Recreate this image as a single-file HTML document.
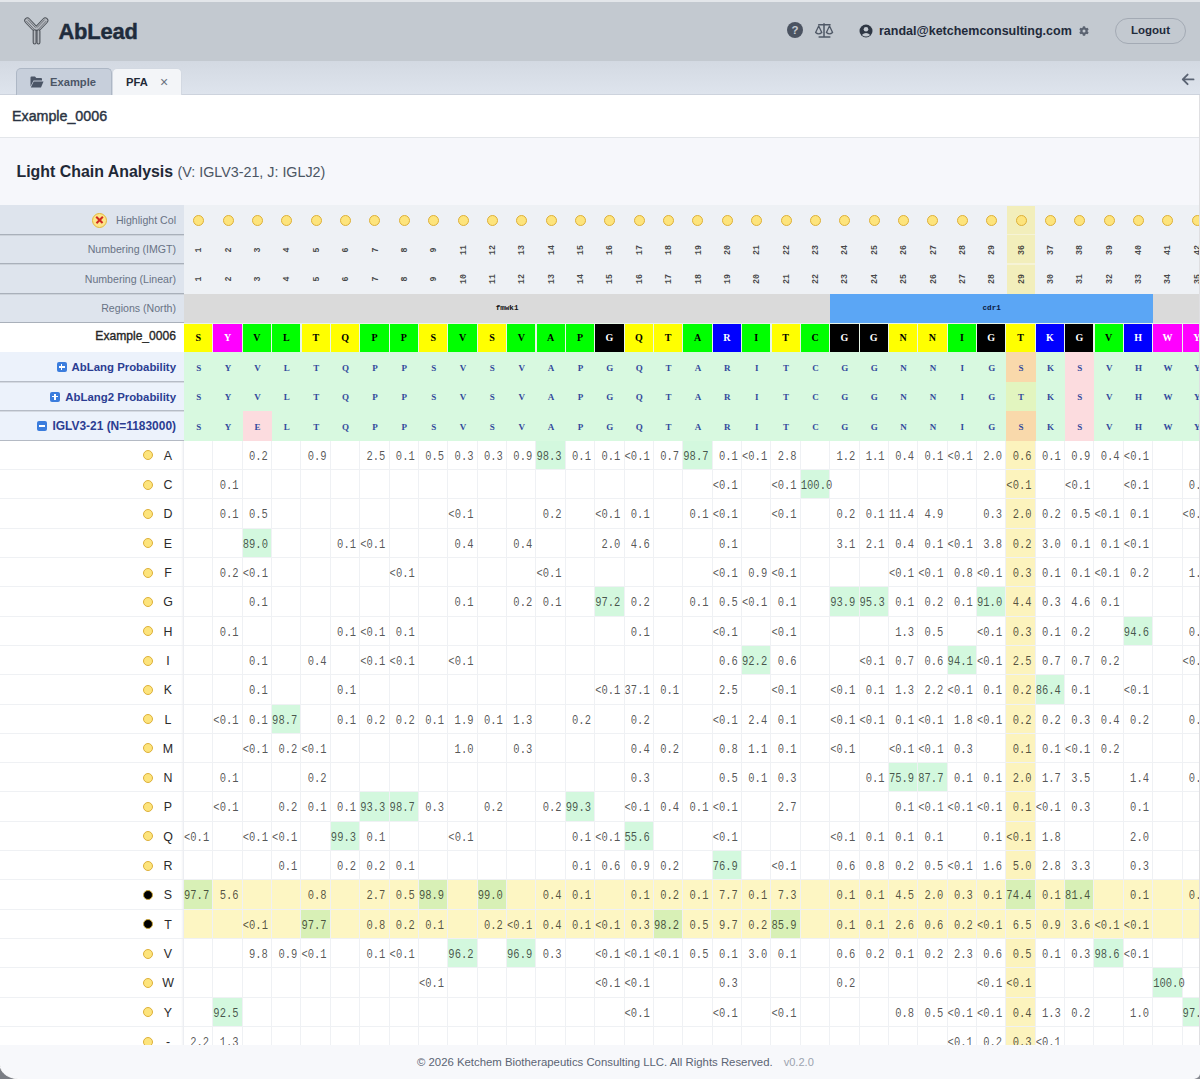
<!DOCTYPE html>
<html><head><meta charset="utf-8">
<style>
html,body{margin:0;padding:0;}
body{width:1200px;height:1079px;overflow:hidden;position:relative;background:#f5f6fa;font-family:"Liberation Sans",sans-serif;}
.a{position:absolute;box-sizing:border-box;}
.hdr{left:0;top:0;width:1200px;height:61px;background:#c3c9d0;}
.logo-t{left:58.5px;top:16.6px;font-size:21.9px;font-weight:bold;color:#1f2c3c;letter-spacing:-0.2px;line-height:30px;-webkit-text-stroke:0.45px #1f2c3c;}
.email{left:879px;top:22.8px;font-size:12.5px;font-weight:bold;color:#1f2a3a;line-height:17px;}
.logout{left:1115px;top:18px;width:71px;height:25.5px;border:1px solid #a3aab4;border-radius:13px;font-size:11.5px;font-weight:bold;color:#1f2a3a;text-align:center;line-height:23px;}
.tabbar{left:0;top:61px;width:1200px;height:34px;background:linear-gradient(#d3d9e2,#dee4ed);border-bottom:1px solid #cdd3dd;}
.tab1{left:16px;top:68px;width:96px;height:27px;background:#c7cfdb;border:1px solid #adb7c5;border-bottom:none;border-radius:5px 5px 0 0;}
.tab2{left:112px;top:68px;width:69.5px;height:27px;background:#f3f5f8;border:1px solid #d3d9e2;border-bottom:none;border-radius:5px 5px 0 0;}
.tabt{font-size:11.2px;font-weight:bold;line-height:27px;}
.panel{left:0;top:95px;width:1200px;height:43px;background:#fff;border-bottom:1px solid #e3e6ea;}
.ptitle{left:12px;top:107.3px;font-size:14.25px;font-weight:normal;-webkit-text-stroke:0.4px #2a3342;color:#2a3342;line-height:18px;}
.sec{left:0;top:138px;width:1200px;height:67.2px;background:#f6f7fb;}
.stitle{left:16.5px;top:162.4px;font-size:15.9px;font-weight:bold;color:#1f2937;line-height:20px;}
.stitle span{margin-left:0px;font-weight:normal;font-size:14.3px;color:#4b5563;}
.lh{left:0;padding-top:0.6px;width:176px;text-align:right;font-size:10.6px;color:#697385;white-space:nowrap;}
.lex{left:0;width:176px;text-align:right;font-size:12.1px;font-weight:normal;-webkit-text-stroke:0.35px #262626;color:#262626;}
.lab{left:0;padding-top:0.8px;width:176px;text-align:right;font-size:11.4px;font-weight:bold;color:#2b3d92;white-space:nowrap;}
.bic{display:inline-block;width:10px;height:10px;background:#3b7ddd;border-radius:2px;margin-right:5px;vertical-align:-1px;position:relative;}
.pl::before,.mi::before{content:"";position:absolute;left:2px;top:4.25px;width:6px;height:1.5px;background:#fff;}
.pl::after{content:"";position:absolute;left:4.25px;top:2px;width:1.5px;height:6px;background:#fff;}
.xic{width:15px;height:15px;border-radius:50%;background:#fde58a;border:1px solid #e3b93c;}
.xic::before,.xic::after{content:"";position:absolute;left:1.9px;top:5.7px;width:9.2px;height:1.6px;background:#cf2a20;transform:rotate(45deg);}
.xic::after{transform:rotate(-45deg);}
.circ{width:11px;height:11px;border-radius:50%;background:#fde47c;border:1px solid #ddb03a;}
.num{width:30px;height:12px;text-align:center;font-family:"Liberation Mono",monospace;font-weight:bold;font-size:8.3px;line-height:12px;color:rgba(40,40,40,0.85);transform:rotate(-90deg);}
.reg{text-align:center;font-family:"Liberation Mono",monospace;font-size:7.6px;font-weight:bold;color:#111;}
.sq{text-align:center;font-family:"Liberation Serif",serif;font-size:10px;font-weight:bold;}
.ab{text-align:center;font-family:"Liberation Serif",serif;font-size:9px;font-weight:bold;color:#33499c;padding-top:1.6px;}
.dot{width:10px;height:10px;border-radius:50%;background:#fde47c;border:1px solid #ddb03a;}
.dot.blk{background:#000;border-color:#c9a43a;}
.aal{width:20px;text-align:center;font-size:12.4px;color:#2b2b2b;padding-top:1px;}
.dv{text-align:right;padding-right:4.2px;padding-top:1px;font-family:"Liberation Mono",monospace;font-size:10.5px;color:rgba(0,0,0,0.68);white-space:nowrap;overflow:visible;transform:translateY(0.9px) scaleY(1.14);}
.foot{left:0;top:1045px;width:1200px;height:34px;background:#f7f8fb;}
.ftxt{left:417px;top:1055px;font-size:11.36px;color:#5b6474;line-height:15px;white-space:nowrap;}
.ftxt span{color:#9ca3af;margin-left:11px;font-size:11.07px;}
</style></head><body>
<div class="a hdr"></div>
<div class="a" style="left:0;top:0;width:1200px;height:1.5px;background:#e3e6ea;"></div>
<svg class="a" style="left:20px;top:14.8px;" width="32" height="32" viewBox="0 0 32 32">
<g fill="none" stroke-linecap="round" stroke-linejoin="round">
<path d="M7.4 5.6 L14.6 13.2 M25.2 5.6 L18 13.2" stroke="#4d5259" stroke-width="6.3"/>
<path d="M7.4 5.6 L14.6 13.2 M25.2 5.6 L18 13.2" stroke="#b4b8be" stroke-width="4.5"/>
<path d="M6.6 6.36 L13.8 13.96 M8.2 4.84 L15.4 12.44 M26 6.36 L18.8 13.96 M24.4 4.84 L17.2 12.44" stroke="#5a5e65" stroke-width="0.75"/>
</g>
<rect x="13.2" y="14.8" width="2.9" height="14.2" rx="1.55" fill="#b4b8be" stroke="#4d5259" stroke-width="1.1"/>
<rect x="17" y="14.8" width="2.9" height="14.2" rx="1.55" fill="#b4b8be" stroke="#4d5259" stroke-width="1.1"/>
</svg>
<div class="a logo-t">AbLead</div>
<svg class="a" style="left:787px;top:22px;" width="16" height="16" viewBox="0 0 16 16"><circle cx="8" cy="8" r="8" fill="#4b5361"/><text x="8" y="12.2" text-anchor="middle" font-family="Liberation Sans" font-weight="bold" font-size="11.5" fill="#c3c9d0">?</text></svg>
<svg class="a" style="left:814px;top:21px;" width="20" height="18" viewBox="0 0 20 18"><g fill="none" stroke="#4f5866" stroke-width="1.5"><path d="M10 2.2 V16 M4.6 16.1 H16.4 M4.2 3.7 H16.6"/><path d="M1.6 11.5 L4.7 5 L7.8 11.5 Q4.7 14.2 1.6 11.5 Z M12.4 11.5 L15.5 5 L18.6 11.5 Q15.5 14.2 12.4 11.5 Z" stroke-width="1.3" stroke-linejoin="round"/></g></svg>
<svg class="a" style="left:859px;top:23.5px;" width="14" height="14" viewBox="0 0 14 14"><circle cx="7" cy="7" r="6.5" fill="#2f3744"/><circle cx="7" cy="5.3" r="2.3" fill="#c3c9d0"/><path d="M2.8 11 Q7 7.2 11.2 11 Q7 14 2.8 11Z" fill="#c3c9d0"/></svg>
<div class="a email">randal@ketchemconsulting.com</div>
<svg class="a" style="left:1078.5px;top:25.5px;" width="10" height="10" viewBox="0 0 10 10"><g fill="#5b6371"><circle cx="5" cy="5" r="3.5"/><rect x="3.7" y="0.2" width="2.6" height="9.6" rx="0.9"/><rect x="3.7" y="0.2" width="2.6" height="9.6" rx="0.9" transform="rotate(60 5 5)"/><rect x="3.7" y="0.2" width="2.6" height="9.6" rx="0.9" transform="rotate(120 5 5)"/></g><circle cx="5" cy="5" r="1.5" fill="#c3c9d0"/></svg>
<div class="a logout">Logout</div>
<div class="a tabbar"></div>
<div class="a tab1"><svg style="position:absolute;left:13px;top:7px;" width="14" height="12" viewBox="0 0 14 12"><path d="M0.5 1.5 Q0.5 0.5 1.5 0.5 H5 L6.3 2 H11 Q12 2 12 3 V4.5 H3.5 L0.5 10.5 Z" fill="#4b5566"/><path d="M3.7 5.5 H13.5 L11 11.5 H0.8 Z" fill="#4b5566"/></svg><span class="a tabt" style="left:33px;top:0;color:#4b5566;">Example</span></div>
<div class="a tab2"><span class="a tabt" style="left:13px;top:0;color:#1f2937;">PFA</span><span class="a" style="left:47px;top:0;font-size:14px;line-height:26px;color:#6b7280;">&#215;</span></div>
<svg class="a" style="left:1181px;top:72px;" width="14" height="14" viewBox="0 0 14 14"><g fill="none" stroke="#5b6474" stroke-width="1.9" stroke-linecap="round" stroke-linejoin="round"><path d="M1.8 7.4 H12.5 M6.6 2.6 L1.8 7.4 L6.6 12.2"/></g></svg>
<div class="a panel"></div>
<div class="a ptitle">Example_0006</div>
<div class="a sec"></div>
<div class="a stitle">Light Chain Analysis <span>(V: IGLV3-21, J: IGLJ2)</span></div>
<div class="a" style="left:0.00px;top:205.20px;width:184.00px;height:29.44px;background:#dee4ed;"></div>
<div class="a" style="left:0.00px;top:234.64px;width:184.00px;height:29.44px;background:#dee4ed;"></div>
<div class="a" style="left:0.00px;top:264.08px;width:184.00px;height:29.44px;background:#dee4ed;"></div>
<div class="a" style="left:0.00px;top:293.52px;width:184.00px;height:29.44px;background:#dee4ed;"></div>
<div class="a" style="left:184.00px;top:205.20px;width:1016.00px;height:88.32px;background:#eef1f5;"></div>
<div class="a" style="left:1007.16px;top:206.00px;width:27.77px;height:87.52px;background:#f2eebb;"></div>
<div class="a" style="left:1007.16px;top:234.04px;width:27.77px;height:1.20px;background:#f6f3d6;"></div>
<div class="a" style="left:1007.16px;top:263.48px;width:27.77px;height:1.20px;background:#f6f3d6;"></div>
<div class="a lh" style="top:205.20px;height:29.44px;line-height:29.44px;">Highlight Col</div>
<div class="a lh" style="top:234.64px;height:29.44px;line-height:29.44px;">Numbering (IMGT)</div>
<div class="a lh" style="top:264.08px;height:29.44px;line-height:29.44px;">Numbering (Linear)</div>
<div class="a lh" style="top:293.52px;height:29.44px;line-height:29.44px;">Regions (North)</div>
<div class="a" style="left:0.00px;top:234.00px;width:184.00px;height:1.00px;background:#a9b0ba;"></div>
<div class="a" style="left:0.00px;top:235.00px;width:184.00px;height:1.00px;background:#ccd2da;"></div>
<div class="a" style="left:0.00px;top:263.00px;width:184.00px;height:1.00px;background:#a9b0ba;"></div>
<div class="a" style="left:0.00px;top:264.00px;width:184.00px;height:1.00px;background:#ccd2da;"></div>
<div class="a" style="left:0.00px;top:293.00px;width:184.00px;height:1.00px;background:#a9b0ba;"></div>
<div class="a" style="left:0.00px;top:294.00px;width:184.00px;height:1.00px;background:#ccd2da;"></div>
<div class="a" style="left:0.00px;top:322.00px;width:184.00px;height:1.00px;background:#a9b0ba;"></div>
<div class="a" style="left:0.00px;top:323.00px;width:184.00px;height:1.00px;background:#ccd2da;"></div>
<div class="a xic" style="left:92px;top:212.5px;"></div>
<div class="a circ" style="left:193.19px;top:215.12px;"></div>
<div class="a circ" style="left:222.56px;top:215.12px;"></div>
<div class="a circ" style="left:251.93px;top:215.12px;"></div>
<div class="a circ" style="left:281.30px;top:215.12px;"></div>
<div class="a circ" style="left:310.67px;top:215.12px;"></div>
<div class="a circ" style="left:340.04px;top:215.12px;"></div>
<div class="a circ" style="left:369.41px;top:215.12px;"></div>
<div class="a circ" style="left:398.78px;top:215.12px;"></div>
<div class="a circ" style="left:428.15px;top:215.12px;"></div>
<div class="a circ" style="left:457.51px;top:215.12px;"></div>
<div class="a circ" style="left:486.88px;top:215.12px;"></div>
<div class="a circ" style="left:516.25px;top:215.12px;"></div>
<div class="a circ" style="left:545.62px;top:215.12px;"></div>
<div class="a circ" style="left:574.99px;top:215.12px;"></div>
<div class="a circ" style="left:604.37px;top:215.12px;"></div>
<div class="a circ" style="left:633.73px;top:215.12px;"></div>
<div class="a circ" style="left:663.11px;top:215.12px;"></div>
<div class="a circ" style="left:692.47px;top:215.12px;"></div>
<div class="a circ" style="left:721.84px;top:215.12px;"></div>
<div class="a circ" style="left:751.21px;top:215.12px;"></div>
<div class="a circ" style="left:780.58px;top:215.12px;"></div>
<div class="a circ" style="left:809.95px;top:215.12px;"></div>
<div class="a circ" style="left:839.32px;top:215.12px;"></div>
<div class="a circ" style="left:868.69px;top:215.12px;"></div>
<div class="a circ" style="left:898.06px;top:215.12px;"></div>
<div class="a circ" style="left:927.43px;top:215.12px;"></div>
<div class="a circ" style="left:956.80px;top:215.12px;"></div>
<div class="a circ" style="left:986.17px;top:215.12px;"></div>
<div class="a circ" style="left:1015.54px;top:215.12px;"></div>
<div class="a circ" style="left:1044.91px;top:215.12px;"></div>
<div class="a circ" style="left:1074.28px;top:215.12px;"></div>
<div class="a circ" style="left:1103.65px;top:215.12px;"></div>
<div class="a circ" style="left:1133.03px;top:215.12px;"></div>
<div class="a circ" style="left:1162.39px;top:215.12px;"></div>
<div class="a circ" style="left:1191.76px;top:215.12px;"></div>
<div class="a num" style="left:184.28px;top:243.86px;">1</div>
<div class="a num" style="left:184.28px;top:273.30px;">1</div>
<div class="a num" style="left:213.66px;top:243.86px;">2</div>
<div class="a num" style="left:213.66px;top:273.30px;">2</div>
<div class="a num" style="left:243.03px;top:243.86px;">3</div>
<div class="a num" style="left:243.03px;top:273.30px;">3</div>
<div class="a num" style="left:272.40px;top:243.86px;">4</div>
<div class="a num" style="left:272.40px;top:273.30px;">4</div>
<div class="a num" style="left:301.77px;top:243.86px;">5</div>
<div class="a num" style="left:301.77px;top:273.30px;">5</div>
<div class="a num" style="left:331.14px;top:243.86px;">6</div>
<div class="a num" style="left:331.14px;top:273.30px;">6</div>
<div class="a num" style="left:360.51px;top:243.86px;">7</div>
<div class="a num" style="left:360.51px;top:273.30px;">7</div>
<div class="a num" style="left:389.88px;top:243.86px;">8</div>
<div class="a num" style="left:389.88px;top:273.30px;">8</div>
<div class="a num" style="left:419.25px;top:243.86px;">9</div>
<div class="a num" style="left:419.25px;top:273.30px;">9</div>
<div class="a num" style="left:448.62px;top:243.86px;">11</div>
<div class="a num" style="left:448.62px;top:273.30px;">10</div>
<div class="a num" style="left:477.99px;top:243.86px;">12</div>
<div class="a num" style="left:477.99px;top:273.30px;">11</div>
<div class="a num" style="left:507.36px;top:243.86px;">13</div>
<div class="a num" style="left:507.36px;top:273.30px;">12</div>
<div class="a num" style="left:536.73px;top:243.86px;">14</div>
<div class="a num" style="left:536.73px;top:273.30px;">13</div>
<div class="a num" style="left:566.09px;top:243.86px;">15</div>
<div class="a num" style="left:566.09px;top:273.30px;">14</div>
<div class="a num" style="left:595.47px;top:243.86px;">16</div>
<div class="a num" style="left:595.47px;top:273.30px;">15</div>
<div class="a num" style="left:624.83px;top:243.86px;">17</div>
<div class="a num" style="left:624.83px;top:273.30px;">16</div>
<div class="a num" style="left:654.21px;top:243.86px;">18</div>
<div class="a num" style="left:654.21px;top:273.30px;">17</div>
<div class="a num" style="left:683.57px;top:243.86px;">19</div>
<div class="a num" style="left:683.57px;top:273.30px;">18</div>
<div class="a num" style="left:712.94px;top:243.86px;">20</div>
<div class="a num" style="left:712.94px;top:273.30px;">19</div>
<div class="a num" style="left:742.31px;top:243.86px;">21</div>
<div class="a num" style="left:742.31px;top:273.30px;">20</div>
<div class="a num" style="left:771.68px;top:243.86px;">22</div>
<div class="a num" style="left:771.68px;top:273.30px;">21</div>
<div class="a num" style="left:801.05px;top:243.86px;">23</div>
<div class="a num" style="left:801.05px;top:273.30px;">22</div>
<div class="a num" style="left:830.42px;top:243.86px;">24</div>
<div class="a num" style="left:830.42px;top:273.30px;">23</div>
<div class="a num" style="left:859.79px;top:243.86px;">25</div>
<div class="a num" style="left:859.79px;top:273.30px;">24</div>
<div class="a num" style="left:889.16px;top:243.86px;">26</div>
<div class="a num" style="left:889.16px;top:273.30px;">25</div>
<div class="a num" style="left:918.53px;top:243.86px;">27</div>
<div class="a num" style="left:918.53px;top:273.30px;">26</div>
<div class="a num" style="left:947.90px;top:243.86px;">28</div>
<div class="a num" style="left:947.90px;top:273.30px;">27</div>
<div class="a num" style="left:977.27px;top:243.86px;">29</div>
<div class="a num" style="left:977.27px;top:273.30px;">28</div>
<div class="a num" style="left:1006.64px;top:243.86px;">36</div>
<div class="a num" style="left:1006.64px;top:273.30px;">29</div>
<div class="a num" style="left:1036.01px;top:243.86px;">37</div>
<div class="a num" style="left:1036.01px;top:273.30px;">30</div>
<div class="a num" style="left:1065.38px;top:243.86px;">38</div>
<div class="a num" style="left:1065.38px;top:273.30px;">31</div>
<div class="a num" style="left:1094.75px;top:243.86px;">39</div>
<div class="a num" style="left:1094.75px;top:273.30px;">32</div>
<div class="a num" style="left:1124.12px;top:243.86px;">40</div>
<div class="a num" style="left:1124.12px;top:273.30px;">33</div>
<div class="a num" style="left:1153.49px;top:243.86px;">41</div>
<div class="a num" style="left:1153.49px;top:273.30px;">34</div>
<div class="a num" style="left:1182.86px;top:243.86px;">42</div>
<div class="a num" style="left:1182.86px;top:273.30px;">35</div>
<div class="a" style="left:184.00px;top:293.52px;width:1016.00px;height:29.44px;background:#dadada;"></div>
<div class="a" style="left:830.14px;top:293.52px;width:323.07px;height:29.44px;background:#5ba6f5;"></div>
<div class="a reg" style="left:184.00px;top:293.52px;width:646.14px;height:29.44px;line-height:29.44px;">fmwk1</div>
<div class="a reg" style="left:830.14px;top:293.52px;width:323.07px;height:29.44px;line-height:29.44px;color:#0b1a40;">cdr1</div>
<div class="a" style="left:0.00px;top:322.96px;width:184.00px;height:29.44px;background:#fff;"></div>
<div class="a lex" style="top:321.96px;height:29.44px;line-height:29.44px;">Example_0006</div>
<div class="a" style="left:184.00px;top:322.96px;width:1016.00px;height:29.44px;background:#e8f5e8;"></div>
<div class="a sq" style="left:184.10px;top:323.66px;width:28.27px;height:28.44px;line-height:28.44px;background:#ffff00;color:#000;">S</div>
<div class="a sq" style="left:213.47px;top:323.66px;width:28.27px;height:28.44px;line-height:28.44px;background:#ff00ff;color:#fff;">Y</div>
<div class="a sq" style="left:242.84px;top:323.66px;width:28.27px;height:28.44px;line-height:28.44px;background:#00ff00;color:#000;">V</div>
<div class="a sq" style="left:272.21px;top:323.66px;width:28.27px;height:28.44px;line-height:28.44px;background:#00ff00;color:#000;">L</div>
<div class="a sq" style="left:301.58px;top:323.66px;width:28.27px;height:28.44px;line-height:28.44px;background:#ffff00;color:#000;">T</div>
<div class="a sq" style="left:330.95px;top:323.66px;width:28.27px;height:28.44px;line-height:28.44px;background:#ffff00;color:#000;">Q</div>
<div class="a sq" style="left:360.32px;top:323.66px;width:28.27px;height:28.44px;line-height:28.44px;background:#00ff00;color:#000;">P</div>
<div class="a sq" style="left:389.69px;top:323.66px;width:28.27px;height:28.44px;line-height:28.44px;background:#00ff00;color:#000;">P</div>
<div class="a sq" style="left:419.06px;top:323.66px;width:28.27px;height:28.44px;line-height:28.44px;background:#ffff00;color:#000;">S</div>
<div class="a sq" style="left:448.43px;top:323.66px;width:28.27px;height:28.44px;line-height:28.44px;background:#00ff00;color:#000;">V</div>
<div class="a sq" style="left:477.80px;top:323.66px;width:28.27px;height:28.44px;line-height:28.44px;background:#ffff00;color:#000;">S</div>
<div class="a sq" style="left:507.17px;top:323.66px;width:28.27px;height:28.44px;line-height:28.44px;background:#00ff00;color:#000;">V</div>
<div class="a sq" style="left:536.54px;top:323.66px;width:28.27px;height:28.44px;line-height:28.44px;background:#00ff00;color:#000;">A</div>
<div class="a sq" style="left:565.91px;top:323.66px;width:28.27px;height:28.44px;line-height:28.44px;background:#00ff00;color:#000;">P</div>
<div class="a sq" style="left:595.28px;top:323.66px;width:28.27px;height:28.44px;line-height:28.44px;background:#000000;color:#fff;">G</div>
<div class="a sq" style="left:624.65px;top:323.66px;width:28.27px;height:28.44px;line-height:28.44px;background:#ffff00;color:#000;">Q</div>
<div class="a sq" style="left:654.02px;top:323.66px;width:28.27px;height:28.44px;line-height:28.44px;background:#ffff00;color:#000;">T</div>
<div class="a sq" style="left:683.39px;top:323.66px;width:28.27px;height:28.44px;line-height:28.44px;background:#00ff00;color:#000;">A</div>
<div class="a sq" style="left:712.76px;top:323.66px;width:28.27px;height:28.44px;line-height:28.44px;background:#0000ff;color:#fff;">R</div>
<div class="a sq" style="left:742.13px;top:323.66px;width:28.27px;height:28.44px;line-height:28.44px;background:#00ff00;color:#000;">I</div>
<div class="a sq" style="left:771.50px;top:323.66px;width:28.27px;height:28.44px;line-height:28.44px;background:#ffff00;color:#000;">T</div>
<div class="a sq" style="left:800.87px;top:323.66px;width:28.27px;height:28.44px;line-height:28.44px;background:#00ff00;color:#000;">C</div>
<div class="a sq" style="left:830.24px;top:323.66px;width:28.27px;height:28.44px;line-height:28.44px;background:#000000;color:#fff;">G</div>
<div class="a sq" style="left:859.61px;top:323.66px;width:28.27px;height:28.44px;line-height:28.44px;background:#000000;color:#fff;">G</div>
<div class="a sq" style="left:888.98px;top:323.66px;width:28.27px;height:28.44px;line-height:28.44px;background:#ffff00;color:#000;">N</div>
<div class="a sq" style="left:918.35px;top:323.66px;width:28.27px;height:28.44px;line-height:28.44px;background:#ffff00;color:#000;">N</div>
<div class="a sq" style="left:947.72px;top:323.66px;width:28.27px;height:28.44px;line-height:28.44px;background:#00ff00;color:#000;">I</div>
<div class="a sq" style="left:977.09px;top:323.66px;width:28.27px;height:28.44px;line-height:28.44px;background:#000000;color:#fff;">G</div>
<div class="a sq" style="left:1006.46px;top:323.66px;width:28.27px;height:28.44px;line-height:28.44px;background:#ffff00;color:#000;">T</div>
<div class="a sq" style="left:1035.83px;top:323.66px;width:28.27px;height:28.44px;line-height:28.44px;background:#0000ff;color:#fff;">K</div>
<div class="a sq" style="left:1065.20px;top:323.66px;width:28.27px;height:28.44px;line-height:28.44px;background:#000000;color:#fff;">G</div>
<div class="a sq" style="left:1094.57px;top:323.66px;width:28.27px;height:28.44px;line-height:28.44px;background:#00ff00;color:#000;">V</div>
<div class="a sq" style="left:1123.94px;top:323.66px;width:28.27px;height:28.44px;line-height:28.44px;background:#0000ff;color:#fff;">H</div>
<div class="a sq" style="left:1153.31px;top:323.66px;width:28.27px;height:28.44px;line-height:28.44px;background:#ff00ff;color:#fff;">W</div>
<div class="a sq" style="left:1182.68px;top:323.66px;width:28.27px;height:28.44px;line-height:28.44px;background:#ff00ff;color:#fff;">Y</div>
<div class="a" style="left:0.00px;top:351.60px;width:1200.00px;height:1.80px;background:#9ba1aa;"></div>
<div class="a" style="left:0.00px;top:352.40px;width:184.00px;height:29.44px;background:#ecf2fb;"></div>
<div class="a lab" style="top:352.40px;height:29.44px;line-height:29.44px;"><span class="bic"><span class="pl"></span></span>AbLang Probability</div>
<div class="a" style="left:184.00px;top:352.40px;width:1016.00px;height:29.44px;background:#d8f9e0;"></div>
<div class="a ab" style="left:184.00px;top:352.40px;width:29.37px;height:29.44px;line-height:29.44px;">S</div>
<div class="a ab" style="left:213.37px;top:352.40px;width:29.37px;height:29.44px;line-height:29.44px;">Y</div>
<div class="a ab" style="left:242.74px;top:352.40px;width:29.37px;height:29.44px;line-height:29.44px;">V</div>
<div class="a ab" style="left:272.11px;top:352.40px;width:29.37px;height:29.44px;line-height:29.44px;">L</div>
<div class="a ab" style="left:301.48px;top:352.40px;width:29.37px;height:29.44px;line-height:29.44px;">T</div>
<div class="a ab" style="left:330.85px;top:352.40px;width:29.37px;height:29.44px;line-height:29.44px;">Q</div>
<div class="a ab" style="left:360.22px;top:352.40px;width:29.37px;height:29.44px;line-height:29.44px;">P</div>
<div class="a ab" style="left:389.59px;top:352.40px;width:29.37px;height:29.44px;line-height:29.44px;">P</div>
<div class="a ab" style="left:418.96px;top:352.40px;width:29.37px;height:29.44px;line-height:29.44px;">S</div>
<div class="a ab" style="left:448.33px;top:352.40px;width:29.37px;height:29.44px;line-height:29.44px;">V</div>
<div class="a ab" style="left:477.70px;top:352.40px;width:29.37px;height:29.44px;line-height:29.44px;">S</div>
<div class="a ab" style="left:507.07px;top:352.40px;width:29.37px;height:29.44px;line-height:29.44px;">V</div>
<div class="a ab" style="left:536.44px;top:352.40px;width:29.37px;height:29.44px;line-height:29.44px;">A</div>
<div class="a ab" style="left:565.81px;top:352.40px;width:29.37px;height:29.44px;line-height:29.44px;">P</div>
<div class="a ab" style="left:595.18px;top:352.40px;width:29.37px;height:29.44px;line-height:29.44px;">G</div>
<div class="a ab" style="left:624.55px;top:352.40px;width:29.37px;height:29.44px;line-height:29.44px;">Q</div>
<div class="a ab" style="left:653.92px;top:352.40px;width:29.37px;height:29.44px;line-height:29.44px;">T</div>
<div class="a ab" style="left:683.29px;top:352.40px;width:29.37px;height:29.44px;line-height:29.44px;">A</div>
<div class="a ab" style="left:712.66px;top:352.40px;width:29.37px;height:29.44px;line-height:29.44px;">R</div>
<div class="a ab" style="left:742.03px;top:352.40px;width:29.37px;height:29.44px;line-height:29.44px;">I</div>
<div class="a ab" style="left:771.40px;top:352.40px;width:29.37px;height:29.44px;line-height:29.44px;">T</div>
<div class="a ab" style="left:800.77px;top:352.40px;width:29.37px;height:29.44px;line-height:29.44px;">C</div>
<div class="a ab" style="left:830.14px;top:352.40px;width:29.37px;height:29.44px;line-height:29.44px;">G</div>
<div class="a ab" style="left:859.51px;top:352.40px;width:29.37px;height:29.44px;line-height:29.44px;">G</div>
<div class="a ab" style="left:888.88px;top:352.40px;width:29.37px;height:29.44px;line-height:29.44px;">N</div>
<div class="a ab" style="left:918.25px;top:352.40px;width:29.37px;height:29.44px;line-height:29.44px;">N</div>
<div class="a ab" style="left:947.62px;top:352.40px;width:29.37px;height:29.44px;line-height:29.44px;">I</div>
<div class="a ab" style="left:976.99px;top:352.40px;width:29.37px;height:29.44px;line-height:29.44px;">G</div>
<div class="a ab" style="left:1006.36px;top:352.40px;width:29.37px;height:29.44px;line-height:29.44px;background:#f9d9ab;">S</div>
<div class="a ab" style="left:1035.73px;top:352.40px;width:29.37px;height:29.44px;line-height:29.44px;">K</div>
<div class="a ab" style="left:1065.10px;top:352.40px;width:29.37px;height:29.44px;line-height:29.44px;background:#fcdcdf;">S</div>
<div class="a ab" style="left:1094.47px;top:352.40px;width:29.37px;height:29.44px;line-height:29.44px;">V</div>
<div class="a ab" style="left:1123.84px;top:352.40px;width:29.37px;height:29.44px;line-height:29.44px;">H</div>
<div class="a ab" style="left:1153.21px;top:352.40px;width:29.37px;height:29.44px;line-height:29.44px;">W</div>
<div class="a ab" style="left:1182.58px;top:352.40px;width:29.37px;height:29.44px;line-height:29.44px;">Y</div>
<div class="a" style="left:0.00px;top:381.84px;width:184.00px;height:29.44px;background:#ecf2fb;"></div>
<div class="a lab" style="top:381.84px;height:29.44px;line-height:29.44px;"><span class="bic"><span class="pl"></span></span>AbLang2 Probability</div>
<div class="a" style="left:184.00px;top:381.84px;width:1016.00px;height:29.44px;background:#d8f9e0;"></div>
<div class="a ab" style="left:184.00px;top:381.84px;width:29.37px;height:29.44px;line-height:29.44px;">S</div>
<div class="a ab" style="left:213.37px;top:381.84px;width:29.37px;height:29.44px;line-height:29.44px;">Y</div>
<div class="a ab" style="left:242.74px;top:381.84px;width:29.37px;height:29.44px;line-height:29.44px;">V</div>
<div class="a ab" style="left:272.11px;top:381.84px;width:29.37px;height:29.44px;line-height:29.44px;">L</div>
<div class="a ab" style="left:301.48px;top:381.84px;width:29.37px;height:29.44px;line-height:29.44px;">T</div>
<div class="a ab" style="left:330.85px;top:381.84px;width:29.37px;height:29.44px;line-height:29.44px;">Q</div>
<div class="a ab" style="left:360.22px;top:381.84px;width:29.37px;height:29.44px;line-height:29.44px;">P</div>
<div class="a ab" style="left:389.59px;top:381.84px;width:29.37px;height:29.44px;line-height:29.44px;">P</div>
<div class="a ab" style="left:418.96px;top:381.84px;width:29.37px;height:29.44px;line-height:29.44px;">S</div>
<div class="a ab" style="left:448.33px;top:381.84px;width:29.37px;height:29.44px;line-height:29.44px;">V</div>
<div class="a ab" style="left:477.70px;top:381.84px;width:29.37px;height:29.44px;line-height:29.44px;">S</div>
<div class="a ab" style="left:507.07px;top:381.84px;width:29.37px;height:29.44px;line-height:29.44px;">V</div>
<div class="a ab" style="left:536.44px;top:381.84px;width:29.37px;height:29.44px;line-height:29.44px;">A</div>
<div class="a ab" style="left:565.81px;top:381.84px;width:29.37px;height:29.44px;line-height:29.44px;">P</div>
<div class="a ab" style="left:595.18px;top:381.84px;width:29.37px;height:29.44px;line-height:29.44px;">G</div>
<div class="a ab" style="left:624.55px;top:381.84px;width:29.37px;height:29.44px;line-height:29.44px;">Q</div>
<div class="a ab" style="left:653.92px;top:381.84px;width:29.37px;height:29.44px;line-height:29.44px;">T</div>
<div class="a ab" style="left:683.29px;top:381.84px;width:29.37px;height:29.44px;line-height:29.44px;">A</div>
<div class="a ab" style="left:712.66px;top:381.84px;width:29.37px;height:29.44px;line-height:29.44px;">R</div>
<div class="a ab" style="left:742.03px;top:381.84px;width:29.37px;height:29.44px;line-height:29.44px;">I</div>
<div class="a ab" style="left:771.40px;top:381.84px;width:29.37px;height:29.44px;line-height:29.44px;">T</div>
<div class="a ab" style="left:800.77px;top:381.84px;width:29.37px;height:29.44px;line-height:29.44px;">C</div>
<div class="a ab" style="left:830.14px;top:381.84px;width:29.37px;height:29.44px;line-height:29.44px;">G</div>
<div class="a ab" style="left:859.51px;top:381.84px;width:29.37px;height:29.44px;line-height:29.44px;">G</div>
<div class="a ab" style="left:888.88px;top:381.84px;width:29.37px;height:29.44px;line-height:29.44px;">N</div>
<div class="a ab" style="left:918.25px;top:381.84px;width:29.37px;height:29.44px;line-height:29.44px;">N</div>
<div class="a ab" style="left:947.62px;top:381.84px;width:29.37px;height:29.44px;line-height:29.44px;">I</div>
<div class="a ab" style="left:976.99px;top:381.84px;width:29.37px;height:29.44px;line-height:29.44px;">G</div>
<div class="a ab" style="left:1006.36px;top:381.84px;width:29.37px;height:29.44px;line-height:29.44px;background:#e2f5bf;">T</div>
<div class="a ab" style="left:1035.73px;top:381.84px;width:29.37px;height:29.44px;line-height:29.44px;">K</div>
<div class="a ab" style="left:1065.10px;top:381.84px;width:29.37px;height:29.44px;line-height:29.44px;background:#fcdcdf;">S</div>
<div class="a ab" style="left:1094.47px;top:381.84px;width:29.37px;height:29.44px;line-height:29.44px;">V</div>
<div class="a ab" style="left:1123.84px;top:381.84px;width:29.37px;height:29.44px;line-height:29.44px;">H</div>
<div class="a ab" style="left:1153.21px;top:381.84px;width:29.37px;height:29.44px;line-height:29.44px;">W</div>
<div class="a ab" style="left:1182.58px;top:381.84px;width:29.37px;height:29.44px;line-height:29.44px;">Y</div>
<div class="a" style="left:0.00px;top:411.28px;width:184.00px;height:29.44px;background:#ecf2fb;"></div>
<div class="a lab" style="top:411.28px;height:29.44px;line-height:29.44px;font-size:11.94px;"><span class="bic"><span class="mi"></span></span>IGLV3-21 (N=1183000)</div>
<div class="a" style="left:184.00px;top:411.28px;width:1016.00px;height:29.44px;background:#d8f9e0;"></div>
<div class="a ab" style="left:184.00px;top:411.28px;width:29.37px;height:29.44px;line-height:29.44px;">S</div>
<div class="a ab" style="left:213.37px;top:411.28px;width:29.37px;height:29.44px;line-height:29.44px;">Y</div>
<div class="a ab" style="left:242.74px;top:411.28px;width:29.37px;height:29.44px;line-height:29.44px;background:#fcdcdf;">E</div>
<div class="a ab" style="left:272.11px;top:411.28px;width:29.37px;height:29.44px;line-height:29.44px;">L</div>
<div class="a ab" style="left:301.48px;top:411.28px;width:29.37px;height:29.44px;line-height:29.44px;">T</div>
<div class="a ab" style="left:330.85px;top:411.28px;width:29.37px;height:29.44px;line-height:29.44px;">Q</div>
<div class="a ab" style="left:360.22px;top:411.28px;width:29.37px;height:29.44px;line-height:29.44px;">P</div>
<div class="a ab" style="left:389.59px;top:411.28px;width:29.37px;height:29.44px;line-height:29.44px;">P</div>
<div class="a ab" style="left:418.96px;top:411.28px;width:29.37px;height:29.44px;line-height:29.44px;">S</div>
<div class="a ab" style="left:448.33px;top:411.28px;width:29.37px;height:29.44px;line-height:29.44px;">V</div>
<div class="a ab" style="left:477.70px;top:411.28px;width:29.37px;height:29.44px;line-height:29.44px;">S</div>
<div class="a ab" style="left:507.07px;top:411.28px;width:29.37px;height:29.44px;line-height:29.44px;">V</div>
<div class="a ab" style="left:536.44px;top:411.28px;width:29.37px;height:29.44px;line-height:29.44px;">A</div>
<div class="a ab" style="left:565.81px;top:411.28px;width:29.37px;height:29.44px;line-height:29.44px;">P</div>
<div class="a ab" style="left:595.18px;top:411.28px;width:29.37px;height:29.44px;line-height:29.44px;">G</div>
<div class="a ab" style="left:624.55px;top:411.28px;width:29.37px;height:29.44px;line-height:29.44px;">Q</div>
<div class="a ab" style="left:653.92px;top:411.28px;width:29.37px;height:29.44px;line-height:29.44px;">T</div>
<div class="a ab" style="left:683.29px;top:411.28px;width:29.37px;height:29.44px;line-height:29.44px;">A</div>
<div class="a ab" style="left:712.66px;top:411.28px;width:29.37px;height:29.44px;line-height:29.44px;">R</div>
<div class="a ab" style="left:742.03px;top:411.28px;width:29.37px;height:29.44px;line-height:29.44px;">I</div>
<div class="a ab" style="left:771.40px;top:411.28px;width:29.37px;height:29.44px;line-height:29.44px;">T</div>
<div class="a ab" style="left:800.77px;top:411.28px;width:29.37px;height:29.44px;line-height:29.44px;">C</div>
<div class="a ab" style="left:830.14px;top:411.28px;width:29.37px;height:29.44px;line-height:29.44px;">G</div>
<div class="a ab" style="left:859.51px;top:411.28px;width:29.37px;height:29.44px;line-height:29.44px;">G</div>
<div class="a ab" style="left:888.88px;top:411.28px;width:29.37px;height:29.44px;line-height:29.44px;">N</div>
<div class="a ab" style="left:918.25px;top:411.28px;width:29.37px;height:29.44px;line-height:29.44px;">N</div>
<div class="a ab" style="left:947.62px;top:411.28px;width:29.37px;height:29.44px;line-height:29.44px;">I</div>
<div class="a ab" style="left:976.99px;top:411.28px;width:29.37px;height:29.44px;line-height:29.44px;">G</div>
<div class="a ab" style="left:1006.36px;top:411.28px;width:29.37px;height:29.44px;line-height:29.44px;background:#f9d9ab;">S</div>
<div class="a ab" style="left:1035.73px;top:411.28px;width:29.37px;height:29.44px;line-height:29.44px;">K</div>
<div class="a ab" style="left:1065.10px;top:411.28px;width:29.37px;height:29.44px;line-height:29.44px;background:#fcdcdf;">S</div>
<div class="a ab" style="left:1094.47px;top:411.28px;width:29.37px;height:29.44px;line-height:29.44px;">V</div>
<div class="a ab" style="left:1123.84px;top:411.28px;width:29.37px;height:29.44px;line-height:29.44px;">H</div>
<div class="a ab" style="left:1153.21px;top:411.28px;width:29.37px;height:29.44px;line-height:29.44px;">W</div>
<div class="a ab" style="left:1182.58px;top:411.28px;width:29.37px;height:29.44px;line-height:29.44px;">Y</div>
<div class="a" style="left:0.00px;top:381.00px;width:184.00px;height:1.00px;background:#b6bcc6;"></div>
<div class="a" style="left:0.00px;top:382.00px;width:184.00px;height:1.00px;background:#d5dae2;"></div>
<div class="a" style="left:0.00px;top:410.00px;width:184.00px;height:1.00px;background:#b6bcc6;"></div>
<div class="a" style="left:0.00px;top:411.00px;width:184.00px;height:1.00px;background:#d5dae2;"></div>
<div class="a" style="left:0.00px;top:439.92px;width:184.00px;height:1.50px;background:#b4bac4;"></div>
<div class="a" style="left:0.00px;top:440.72px;width:184.00px;height:29.31px;background:#fff;"></div>
<div class="a dot" style="left:143px;top:450.38px;"></div>
<div class="a aal" style="left:158px;top:440.72px;height:29.31px;line-height:29.31px;">A</div>
<div class="a" style="left:184.00px;top:440.72px;width:1016.00px;height:29.31px;background:#fff;"></div>
<div class="a" style="left:536.44px;top:440.72px;width:29.37px;height:29.31px;background:#d3f8de;"></div>
<div class="a" style="left:683.29px;top:440.72px;width:29.37px;height:29.31px;background:#d3f8de;"></div>
<div class="a" style="left:1006.36px;top:440.72px;width:29.37px;height:29.31px;background:#fcf3bd;"></div>
<div class="a" style="left:0.00px;top:470.03px;width:184.00px;height:29.31px;background:#fff;"></div>
<div class="a dot" style="left:143px;top:479.69px;"></div>
<div class="a aal" style="left:158px;top:470.03px;height:29.31px;line-height:29.31px;">C</div>
<div class="a" style="left:184.00px;top:470.03px;width:1016.00px;height:29.31px;background:#fff;"></div>
<div class="a" style="left:800.77px;top:470.03px;width:29.37px;height:29.31px;background:#d3f8de;"></div>
<div class="a" style="left:1006.36px;top:470.03px;width:29.37px;height:29.31px;background:#fcf3bd;"></div>
<div class="a" style="left:0.00px;top:499.34px;width:184.00px;height:29.31px;background:#fff;"></div>
<div class="a dot" style="left:143px;top:509.00px;"></div>
<div class="a aal" style="left:158px;top:499.34px;height:29.31px;line-height:29.31px;">D</div>
<div class="a" style="left:184.00px;top:499.34px;width:1016.00px;height:29.31px;background:#fff;"></div>
<div class="a" style="left:1006.36px;top:499.34px;width:29.37px;height:29.31px;background:#fcf3bd;"></div>
<div class="a" style="left:0.00px;top:528.65px;width:184.00px;height:29.31px;background:#fff;"></div>
<div class="a dot" style="left:143px;top:538.30px;"></div>
<div class="a aal" style="left:158px;top:528.65px;height:29.31px;line-height:29.31px;">E</div>
<div class="a" style="left:184.00px;top:528.65px;width:1016.00px;height:29.31px;background:#fff;"></div>
<div class="a" style="left:242.74px;top:528.65px;width:29.37px;height:29.31px;background:#d3f8de;"></div>
<div class="a" style="left:1006.36px;top:528.65px;width:29.37px;height:29.31px;background:#fcf3bd;"></div>
<div class="a" style="left:0.00px;top:557.96px;width:184.00px;height:29.31px;background:#fff;"></div>
<div class="a dot" style="left:143px;top:567.62px;"></div>
<div class="a aal" style="left:158px;top:557.96px;height:29.31px;line-height:29.31px;">F</div>
<div class="a" style="left:184.00px;top:557.96px;width:1016.00px;height:29.31px;background:#fff;"></div>
<div class="a" style="left:1006.36px;top:557.96px;width:29.37px;height:29.31px;background:#fcf3bd;"></div>
<div class="a" style="left:0.00px;top:587.27px;width:184.00px;height:29.31px;background:#fff;"></div>
<div class="a dot" style="left:143px;top:596.92px;"></div>
<div class="a aal" style="left:158px;top:587.27px;height:29.31px;line-height:29.31px;">G</div>
<div class="a" style="left:184.00px;top:587.27px;width:1016.00px;height:29.31px;background:#fff;"></div>
<div class="a" style="left:595.18px;top:587.27px;width:29.37px;height:29.31px;background:#d3f8de;"></div>
<div class="a" style="left:830.14px;top:587.27px;width:29.37px;height:29.31px;background:#d3f8de;"></div>
<div class="a" style="left:859.51px;top:587.27px;width:29.37px;height:29.31px;background:#d3f8de;"></div>
<div class="a" style="left:976.99px;top:587.27px;width:29.37px;height:29.31px;background:#d3f8de;"></div>
<div class="a" style="left:1006.36px;top:587.27px;width:29.37px;height:29.31px;background:#fcf3bd;"></div>
<div class="a" style="left:0.00px;top:616.58px;width:184.00px;height:29.31px;background:#fff;"></div>
<div class="a dot" style="left:143px;top:626.24px;"></div>
<div class="a aal" style="left:158px;top:616.58px;height:29.31px;line-height:29.31px;">H</div>
<div class="a" style="left:184.00px;top:616.58px;width:1016.00px;height:29.31px;background:#fff;"></div>
<div class="a" style="left:1006.36px;top:616.58px;width:29.37px;height:29.31px;background:#fcf3bd;"></div>
<div class="a" style="left:1123.84px;top:616.58px;width:29.37px;height:29.31px;background:#d3f8de;"></div>
<div class="a" style="left:0.00px;top:645.89px;width:184.00px;height:29.31px;background:#fff;"></div>
<div class="a dot" style="left:143px;top:655.54px;"></div>
<div class="a aal" style="left:158px;top:645.89px;height:29.31px;line-height:29.31px;">I</div>
<div class="a" style="left:184.00px;top:645.89px;width:1016.00px;height:29.31px;background:#fff;"></div>
<div class="a" style="left:742.03px;top:645.89px;width:29.37px;height:29.31px;background:#d3f8de;"></div>
<div class="a" style="left:947.62px;top:645.89px;width:29.37px;height:29.31px;background:#d3f8de;"></div>
<div class="a" style="left:1006.36px;top:645.89px;width:29.37px;height:29.31px;background:#fcf3bd;"></div>
<div class="a" style="left:0.00px;top:675.20px;width:184.00px;height:29.31px;background:#fff;"></div>
<div class="a dot" style="left:143px;top:684.86px;"></div>
<div class="a aal" style="left:158px;top:675.20px;height:29.31px;line-height:29.31px;">K</div>
<div class="a" style="left:184.00px;top:675.20px;width:1016.00px;height:29.31px;background:#fff;"></div>
<div class="a" style="left:1006.36px;top:675.20px;width:29.37px;height:29.31px;background:#fcf3bd;"></div>
<div class="a" style="left:1035.73px;top:675.20px;width:29.37px;height:29.31px;background:#d3f8de;"></div>
<div class="a" style="left:0.00px;top:704.51px;width:184.00px;height:29.31px;background:#fff;"></div>
<div class="a dot" style="left:143px;top:714.16px;"></div>
<div class="a aal" style="left:158px;top:704.51px;height:29.31px;line-height:29.31px;">L</div>
<div class="a" style="left:184.00px;top:704.51px;width:1016.00px;height:29.31px;background:#fff;"></div>
<div class="a" style="left:272.11px;top:704.51px;width:29.37px;height:29.31px;background:#d3f8de;"></div>
<div class="a" style="left:1006.36px;top:704.51px;width:29.37px;height:29.31px;background:#fcf3bd;"></div>
<div class="a" style="left:0.00px;top:733.82px;width:184.00px;height:29.31px;background:#fff;"></div>
<div class="a dot" style="left:143px;top:743.47px;"></div>
<div class="a aal" style="left:158px;top:733.82px;height:29.31px;line-height:29.31px;">M</div>
<div class="a" style="left:184.00px;top:733.82px;width:1016.00px;height:29.31px;background:#fff;"></div>
<div class="a" style="left:1006.36px;top:733.82px;width:29.37px;height:29.31px;background:#fcf3bd;"></div>
<div class="a" style="left:0.00px;top:763.13px;width:184.00px;height:29.31px;background:#fff;"></div>
<div class="a dot" style="left:143px;top:772.78px;"></div>
<div class="a aal" style="left:158px;top:763.13px;height:29.31px;line-height:29.31px;">N</div>
<div class="a" style="left:184.00px;top:763.13px;width:1016.00px;height:29.31px;background:#fff;"></div>
<div class="a" style="left:888.88px;top:763.13px;width:29.37px;height:29.31px;background:#d3f8de;"></div>
<div class="a" style="left:918.25px;top:763.13px;width:29.37px;height:29.31px;background:#d3f8de;"></div>
<div class="a" style="left:1006.36px;top:763.13px;width:29.37px;height:29.31px;background:#fcf3bd;"></div>
<div class="a" style="left:0.00px;top:792.44px;width:184.00px;height:29.31px;background:#fff;"></div>
<div class="a dot" style="left:143px;top:802.10px;"></div>
<div class="a aal" style="left:158px;top:792.44px;height:29.31px;line-height:29.31px;">P</div>
<div class="a" style="left:184.00px;top:792.44px;width:1016.00px;height:29.31px;background:#fff;"></div>
<div class="a" style="left:360.22px;top:792.44px;width:29.37px;height:29.31px;background:#d3f8de;"></div>
<div class="a" style="left:389.59px;top:792.44px;width:29.37px;height:29.31px;background:#d3f8de;"></div>
<div class="a" style="left:565.81px;top:792.44px;width:29.37px;height:29.31px;background:#d3f8de;"></div>
<div class="a" style="left:1006.36px;top:792.44px;width:29.37px;height:29.31px;background:#fcf3bd;"></div>
<div class="a" style="left:0.00px;top:821.75px;width:184.00px;height:29.31px;background:#fff;"></div>
<div class="a dot" style="left:143px;top:831.40px;"></div>
<div class="a aal" style="left:158px;top:821.75px;height:29.31px;line-height:29.31px;">Q</div>
<div class="a" style="left:184.00px;top:821.75px;width:1016.00px;height:29.31px;background:#fff;"></div>
<div class="a" style="left:330.85px;top:821.75px;width:29.37px;height:29.31px;background:#d3f8de;"></div>
<div class="a" style="left:624.55px;top:821.75px;width:29.37px;height:29.31px;background:#d3f8de;"></div>
<div class="a" style="left:1006.36px;top:821.75px;width:29.37px;height:29.31px;background:#fcf3bd;"></div>
<div class="a" style="left:0.00px;top:851.06px;width:184.00px;height:29.31px;background:#fff;"></div>
<div class="a dot" style="left:143px;top:860.71px;"></div>
<div class="a aal" style="left:158px;top:851.06px;height:29.31px;line-height:29.31px;">R</div>
<div class="a" style="left:184.00px;top:851.06px;width:1016.00px;height:29.31px;background:#fff;"></div>
<div class="a" style="left:712.66px;top:851.06px;width:29.37px;height:29.31px;background:#d3f8de;"></div>
<div class="a" style="left:1006.36px;top:851.06px;width:29.37px;height:29.31px;background:#fcf3bd;"></div>
<div class="a" style="left:0.00px;top:880.37px;width:184.00px;height:29.31px;background:#fff;"></div>
<div class="a dot blk" style="left:143px;top:890.02px;"></div>
<div class="a aal" style="left:158px;top:880.37px;height:29.31px;line-height:29.31px;">S</div>
<div class="a" style="left:184.00px;top:880.37px;width:1016.00px;height:29.31px;background:#fdf6c3;"></div>
<div class="a" style="left:184.00px;top:880.37px;width:29.37px;height:29.31px;background:#d8f0b6;"></div>
<div class="a" style="left:418.96px;top:880.37px;width:29.37px;height:29.31px;background:#d8f0b6;"></div>
<div class="a" style="left:477.70px;top:880.37px;width:29.37px;height:29.31px;background:#d8f0b6;"></div>
<div class="a" style="left:1006.36px;top:880.37px;width:29.37px;height:29.31px;background:#d8f0b6;"></div>
<div class="a" style="left:1065.10px;top:880.37px;width:29.37px;height:29.31px;background:#d8f0b6;"></div>
<div class="a" style="left:0.00px;top:909.68px;width:184.00px;height:29.31px;background:#fff;"></div>
<div class="a dot blk" style="left:143px;top:919.34px;"></div>
<div class="a aal" style="left:158px;top:909.68px;height:29.31px;line-height:29.31px;">T</div>
<div class="a" style="left:184.00px;top:909.68px;width:1016.00px;height:29.31px;background:#fdf6c3;"></div>
<div class="a" style="left:301.48px;top:909.68px;width:29.37px;height:29.31px;background:#d8f0b6;"></div>
<div class="a" style="left:653.92px;top:909.68px;width:29.37px;height:29.31px;background:#d8f0b6;"></div>
<div class="a" style="left:771.40px;top:909.68px;width:29.37px;height:29.31px;background:#d8f0b6;"></div>
<div class="a" style="left:0.00px;top:938.99px;width:184.00px;height:29.31px;background:#fff;"></div>
<div class="a dot" style="left:143px;top:948.64px;"></div>
<div class="a aal" style="left:158px;top:938.99px;height:29.31px;line-height:29.31px;">V</div>
<div class="a" style="left:184.00px;top:938.99px;width:1016.00px;height:29.31px;background:#fff;"></div>
<div class="a" style="left:448.33px;top:938.99px;width:29.37px;height:29.31px;background:#d3f8de;"></div>
<div class="a" style="left:507.07px;top:938.99px;width:29.37px;height:29.31px;background:#d3f8de;"></div>
<div class="a" style="left:1006.36px;top:938.99px;width:29.37px;height:29.31px;background:#fcf3bd;"></div>
<div class="a" style="left:1094.47px;top:938.99px;width:29.37px;height:29.31px;background:#d3f8de;"></div>
<div class="a" style="left:0.00px;top:968.30px;width:184.00px;height:29.31px;background:#fff;"></div>
<div class="a dot" style="left:143px;top:977.95px;"></div>
<div class="a aal" style="left:158px;top:968.30px;height:29.31px;line-height:29.31px;">W</div>
<div class="a" style="left:184.00px;top:968.30px;width:1016.00px;height:29.31px;background:#fff;"></div>
<div class="a" style="left:1006.36px;top:968.30px;width:29.37px;height:29.31px;background:#fcf3bd;"></div>
<div class="a" style="left:1153.21px;top:968.30px;width:29.37px;height:29.31px;background:#d3f8de;"></div>
<div class="a" style="left:0.00px;top:997.61px;width:184.00px;height:29.31px;background:#fff;"></div>
<div class="a dot" style="left:143px;top:1007.26px;"></div>
<div class="a aal" style="left:158px;top:997.61px;height:29.31px;line-height:29.31px;">Y</div>
<div class="a" style="left:184.00px;top:997.61px;width:1016.00px;height:29.31px;background:#fff;"></div>
<div class="a" style="left:213.37px;top:997.61px;width:29.37px;height:29.31px;background:#d3f8de;"></div>
<div class="a" style="left:1006.36px;top:997.61px;width:29.37px;height:29.31px;background:#fcf3bd;"></div>
<div class="a" style="left:1182.58px;top:997.61px;width:29.37px;height:29.31px;background:#d3f8de;"></div>
<div class="a" style="left:0.00px;top:1026.92px;width:184.00px;height:29.31px;background:#fff;"></div>
<div class="a dot" style="left:143px;top:1036.58px;"></div>
<div class="a aal" style="left:158px;top:1026.92px;height:29.31px;line-height:29.31px;">-</div>
<div class="a" style="left:184.00px;top:1026.92px;width:1016.00px;height:29.31px;background:#fff;"></div>
<div class="a" style="left:1006.36px;top:1026.92px;width:29.37px;height:29.31px;background:#fcf3bd;"></div>
<div class="a" style="left:0.00px;top:469.00px;width:1200.00px;height:1.00px;background:#eff1f4;"></div>
<div class="a" style="left:0.00px;top:498.00px;width:1200.00px;height:1.00px;background:#eff1f4;"></div>
<div class="a" style="left:0.00px;top:528.00px;width:1200.00px;height:1.00px;background:#eff1f4;"></div>
<div class="a" style="left:0.00px;top:557.00px;width:1200.00px;height:1.00px;background:#eff1f4;"></div>
<div class="a" style="left:0.00px;top:586.00px;width:1200.00px;height:1.00px;background:#eff1f4;"></div>
<div class="a" style="left:0.00px;top:616.00px;width:1200.00px;height:1.00px;background:#eff1f4;"></div>
<div class="a" style="left:0.00px;top:645.00px;width:1200.00px;height:1.00px;background:#eff1f4;"></div>
<div class="a" style="left:0.00px;top:674.00px;width:1200.00px;height:1.00px;background:#eff1f4;"></div>
<div class="a" style="left:0.00px;top:704.00px;width:1200.00px;height:1.00px;background:#eff1f4;"></div>
<div class="a" style="left:0.00px;top:733.00px;width:1200.00px;height:1.00px;background:#eff1f4;"></div>
<div class="a" style="left:0.00px;top:762.00px;width:1200.00px;height:1.00px;background:#eff1f4;"></div>
<div class="a" style="left:0.00px;top:791.00px;width:1200.00px;height:1.00px;background:#eff1f4;"></div>
<div class="a" style="left:0.00px;top:821.00px;width:1200.00px;height:1.00px;background:#eff1f4;"></div>
<div class="a" style="left:0.00px;top:850.00px;width:1200.00px;height:1.00px;background:#eff1f4;"></div>
<div class="a" style="left:0.00px;top:879.00px;width:1200.00px;height:1.00px;background:#eff1f4;"></div>
<div class="a" style="left:0.00px;top:909.00px;width:1200.00px;height:1.00px;background:#eff1f4;"></div>
<div class="a" style="left:0.00px;top:938.00px;width:1200.00px;height:1.00px;background:#eff1f4;"></div>
<div class="a" style="left:0.00px;top:967.00px;width:1200.00px;height:1.00px;background:#eff1f4;"></div>
<div class="a" style="left:0.00px;top:997.00px;width:1200.00px;height:1.00px;background:#eff1f4;"></div>
<div class="a" style="left:0.00px;top:1026.00px;width:1200.00px;height:1.00px;background:#eff1f4;"></div>
<div class="a" style="left:0.00px;top:1055.00px;width:1200.00px;height:1.00px;background:#eff1f4;"></div>
<div class="a" style="left:183.00px;top:440.72px;width:1.00px;height:604.28px;background:#eff1f4;"></div>
<div class="a" style="left:212.00px;top:440.72px;width:1.00px;height:604.28px;background:#eff1f4;"></div>
<div class="a" style="left:242.00px;top:440.72px;width:1.00px;height:604.28px;background:#eff1f4;"></div>
<div class="a" style="left:271.00px;top:440.72px;width:1.00px;height:604.28px;background:#eff1f4;"></div>
<div class="a" style="left:300.00px;top:440.72px;width:1.00px;height:604.28px;background:#eff1f4;"></div>
<div class="a" style="left:330.00px;top:440.72px;width:1.00px;height:604.28px;background:#eff1f4;"></div>
<div class="a" style="left:359.00px;top:440.72px;width:1.00px;height:604.28px;background:#eff1f4;"></div>
<div class="a" style="left:389.00px;top:440.72px;width:1.00px;height:604.28px;background:#eff1f4;"></div>
<div class="a" style="left:418.00px;top:440.72px;width:1.00px;height:604.28px;background:#eff1f4;"></div>
<div class="a" style="left:447.00px;top:440.72px;width:1.00px;height:604.28px;background:#eff1f4;"></div>
<div class="a" style="left:477.00px;top:440.72px;width:1.00px;height:604.28px;background:#eff1f4;"></div>
<div class="a" style="left:506.00px;top:440.72px;width:1.00px;height:604.28px;background:#eff1f4;"></div>
<div class="a" style="left:535.00px;top:440.72px;width:1.00px;height:604.28px;background:#eff1f4;"></div>
<div class="a" style="left:565.00px;top:440.72px;width:1.00px;height:604.28px;background:#eff1f4;"></div>
<div class="a" style="left:594.00px;top:440.72px;width:1.00px;height:604.28px;background:#eff1f4;"></div>
<div class="a" style="left:624.00px;top:440.72px;width:1.00px;height:604.28px;background:#eff1f4;"></div>
<div class="a" style="left:653.00px;top:440.72px;width:1.00px;height:604.28px;background:#eff1f4;"></div>
<div class="a" style="left:682.00px;top:440.72px;width:1.00px;height:604.28px;background:#eff1f4;"></div>
<div class="a" style="left:712.00px;top:440.72px;width:1.00px;height:604.28px;background:#eff1f4;"></div>
<div class="a" style="left:741.00px;top:440.72px;width:1.00px;height:604.28px;background:#eff1f4;"></div>
<div class="a" style="left:770.00px;top:440.72px;width:1.00px;height:604.28px;background:#eff1f4;"></div>
<div class="a" style="left:800.00px;top:440.72px;width:1.00px;height:604.28px;background:#eff1f4;"></div>
<div class="a" style="left:829.00px;top:440.72px;width:1.00px;height:604.28px;background:#eff1f4;"></div>
<div class="a" style="left:859.00px;top:440.72px;width:1.00px;height:604.28px;background:#eff1f4;"></div>
<div class="a" style="left:888.00px;top:440.72px;width:1.00px;height:604.28px;background:#eff1f4;"></div>
<div class="a" style="left:917.00px;top:440.72px;width:1.00px;height:604.28px;background:#eff1f4;"></div>
<div class="a" style="left:947.00px;top:440.72px;width:1.00px;height:604.28px;background:#eff1f4;"></div>
<div class="a" style="left:976.00px;top:440.72px;width:1.00px;height:604.28px;background:#eff1f4;"></div>
<div class="a" style="left:1005.00px;top:440.72px;width:1.00px;height:604.28px;background:#eff1f4;"></div>
<div class="a" style="left:1035.00px;top:440.72px;width:1.00px;height:604.28px;background:#eff1f4;"></div>
<div class="a" style="left:1064.00px;top:440.72px;width:1.00px;height:604.28px;background:#eff1f4;"></div>
<div class="a" style="left:1093.00px;top:440.72px;width:1.00px;height:604.28px;background:#eff1f4;"></div>
<div class="a" style="left:1123.00px;top:440.72px;width:1.00px;height:604.28px;background:#eff1f4;"></div>
<div class="a" style="left:1152.00px;top:440.72px;width:1.00px;height:604.28px;background:#eff1f4;"></div>
<div class="a" style="left:1182.00px;top:440.72px;width:1.00px;height:604.28px;background:#eff1f4;"></div>
<div class="a" style="left:181.00px;top:440.72px;width:3.00px;height:604.28px;background:linear-gradient(90deg,rgba(235,237,241,0),rgba(235,237,241,0.9));"></div>
<div class="a dv" style="left:242.74px;top:440.72px;width:29.37px;height:29.31px;line-height:29.31px;">0.2</div>
<div class="a dv" style="left:301.48px;top:440.72px;width:29.37px;height:29.31px;line-height:29.31px;">0.9</div>
<div class="a dv" style="left:360.22px;top:440.72px;width:29.37px;height:29.31px;line-height:29.31px;">2.5</div>
<div class="a dv" style="left:389.59px;top:440.72px;width:29.37px;height:29.31px;line-height:29.31px;">0.1</div>
<div class="a dv" style="left:418.96px;top:440.72px;width:29.37px;height:29.31px;line-height:29.31px;">0.5</div>
<div class="a dv" style="left:448.33px;top:440.72px;width:29.37px;height:29.31px;line-height:29.31px;">0.3</div>
<div class="a dv" style="left:477.70px;top:440.72px;width:29.37px;height:29.31px;line-height:29.31px;">0.3</div>
<div class="a dv" style="left:507.07px;top:440.72px;width:29.37px;height:29.31px;line-height:29.31px;">0.9</div>
<div class="a dv" style="left:536.44px;top:440.72px;width:29.37px;height:29.31px;line-height:29.31px;">98.3</div>
<div class="a dv" style="left:565.81px;top:440.72px;width:29.37px;height:29.31px;line-height:29.31px;">0.1</div>
<div class="a dv" style="left:595.18px;top:440.72px;width:29.37px;height:29.31px;line-height:29.31px;">0.1</div>
<div class="a dv" style="left:624.55px;top:440.72px;width:29.37px;height:29.31px;line-height:29.31px;"><0.1</div>
<div class="a dv" style="left:653.92px;top:440.72px;width:29.37px;height:29.31px;line-height:29.31px;">0.7</div>
<div class="a dv" style="left:683.29px;top:440.72px;width:29.37px;height:29.31px;line-height:29.31px;">98.7</div>
<div class="a dv" style="left:712.66px;top:440.72px;width:29.37px;height:29.31px;line-height:29.31px;">0.1</div>
<div class="a dv" style="left:742.03px;top:440.72px;width:29.37px;height:29.31px;line-height:29.31px;"><0.1</div>
<div class="a dv" style="left:771.40px;top:440.72px;width:29.37px;height:29.31px;line-height:29.31px;">2.8</div>
<div class="a dv" style="left:830.14px;top:440.72px;width:29.37px;height:29.31px;line-height:29.31px;">1.2</div>
<div class="a dv" style="left:859.51px;top:440.72px;width:29.37px;height:29.31px;line-height:29.31px;">1.1</div>
<div class="a dv" style="left:888.88px;top:440.72px;width:29.37px;height:29.31px;line-height:29.31px;">0.4</div>
<div class="a dv" style="left:918.25px;top:440.72px;width:29.37px;height:29.31px;line-height:29.31px;">0.1</div>
<div class="a dv" style="left:947.62px;top:440.72px;width:29.37px;height:29.31px;line-height:29.31px;"><0.1</div>
<div class="a dv" style="left:976.99px;top:440.72px;width:29.37px;height:29.31px;line-height:29.31px;">2.0</div>
<div class="a dv" style="left:1006.36px;top:440.72px;width:29.37px;height:29.31px;line-height:29.31px;">0.6</div>
<div class="a dv" style="left:1035.73px;top:440.72px;width:29.37px;height:29.31px;line-height:29.31px;">0.1</div>
<div class="a dv" style="left:1065.10px;top:440.72px;width:29.37px;height:29.31px;line-height:29.31px;">0.9</div>
<div class="a dv" style="left:1094.47px;top:440.72px;width:29.37px;height:29.31px;line-height:29.31px;">0.4</div>
<div class="a dv" style="left:1123.84px;top:440.72px;width:29.37px;height:29.31px;line-height:29.31px;"><0.1</div>
<div class="a dv" style="left:213.37px;top:470.03px;width:29.37px;height:29.31px;line-height:29.31px;">0.1</div>
<div class="a dv" style="left:712.66px;top:470.03px;width:29.37px;height:29.31px;line-height:29.31px;"><0.1</div>
<div class="a dv" style="left:771.40px;top:470.03px;width:29.37px;height:29.31px;line-height:29.31px;"><0.1</div>
<div class="a dv" style="left:800.77px;top:470.03px;width:29.37px;height:29.31px;line-height:29.31px;">100.0</div>
<div class="a dv" style="left:1006.36px;top:470.03px;width:29.37px;height:29.31px;line-height:29.31px;"><0.1</div>
<div class="a dv" style="left:1065.10px;top:470.03px;width:29.37px;height:29.31px;line-height:29.31px;"><0.1</div>
<div class="a dv" style="left:1123.84px;top:470.03px;width:29.37px;height:29.31px;line-height:29.31px;"><0.1</div>
<div class="a dv" style="left:1182.58px;top:470.03px;width:29.37px;height:29.31px;line-height:29.31px;">0.1</div>
<div class="a dv" style="left:213.37px;top:499.34px;width:29.37px;height:29.31px;line-height:29.31px;">0.1</div>
<div class="a dv" style="left:242.74px;top:499.34px;width:29.37px;height:29.31px;line-height:29.31px;">0.5</div>
<div class="a dv" style="left:448.33px;top:499.34px;width:29.37px;height:29.31px;line-height:29.31px;"><0.1</div>
<div class="a dv" style="left:536.44px;top:499.34px;width:29.37px;height:29.31px;line-height:29.31px;">0.2</div>
<div class="a dv" style="left:595.18px;top:499.34px;width:29.37px;height:29.31px;line-height:29.31px;"><0.1</div>
<div class="a dv" style="left:624.55px;top:499.34px;width:29.37px;height:29.31px;line-height:29.31px;">0.1</div>
<div class="a dv" style="left:683.29px;top:499.34px;width:29.37px;height:29.31px;line-height:29.31px;">0.1</div>
<div class="a dv" style="left:712.66px;top:499.34px;width:29.37px;height:29.31px;line-height:29.31px;"><0.1</div>
<div class="a dv" style="left:771.40px;top:499.34px;width:29.37px;height:29.31px;line-height:29.31px;"><0.1</div>
<div class="a dv" style="left:830.14px;top:499.34px;width:29.37px;height:29.31px;line-height:29.31px;">0.2</div>
<div class="a dv" style="left:859.51px;top:499.34px;width:29.37px;height:29.31px;line-height:29.31px;">0.1</div>
<div class="a dv" style="left:888.88px;top:499.34px;width:29.37px;height:29.31px;line-height:29.31px;">11.4</div>
<div class="a dv" style="left:918.25px;top:499.34px;width:29.37px;height:29.31px;line-height:29.31px;">4.9</div>
<div class="a dv" style="left:976.99px;top:499.34px;width:29.37px;height:29.31px;line-height:29.31px;">0.3</div>
<div class="a dv" style="left:1006.36px;top:499.34px;width:29.37px;height:29.31px;line-height:29.31px;">2.0</div>
<div class="a dv" style="left:1035.73px;top:499.34px;width:29.37px;height:29.31px;line-height:29.31px;">0.2</div>
<div class="a dv" style="left:1065.10px;top:499.34px;width:29.37px;height:29.31px;line-height:29.31px;">0.5</div>
<div class="a dv" style="left:1094.47px;top:499.34px;width:29.37px;height:29.31px;line-height:29.31px;"><0.1</div>
<div class="a dv" style="left:1123.84px;top:499.34px;width:29.37px;height:29.31px;line-height:29.31px;">0.1</div>
<div class="a dv" style="left:1182.58px;top:499.34px;width:29.37px;height:29.31px;line-height:29.31px;"><0.1</div>
<div class="a dv" style="left:242.74px;top:528.65px;width:29.37px;height:29.31px;line-height:29.31px;">89.0</div>
<div class="a dv" style="left:330.85px;top:528.65px;width:29.37px;height:29.31px;line-height:29.31px;">0.1</div>
<div class="a dv" style="left:360.22px;top:528.65px;width:29.37px;height:29.31px;line-height:29.31px;"><0.1</div>
<div class="a dv" style="left:448.33px;top:528.65px;width:29.37px;height:29.31px;line-height:29.31px;">0.4</div>
<div class="a dv" style="left:507.07px;top:528.65px;width:29.37px;height:29.31px;line-height:29.31px;">0.4</div>
<div class="a dv" style="left:595.18px;top:528.65px;width:29.37px;height:29.31px;line-height:29.31px;">2.0</div>
<div class="a dv" style="left:624.55px;top:528.65px;width:29.37px;height:29.31px;line-height:29.31px;">4.6</div>
<div class="a dv" style="left:712.66px;top:528.65px;width:29.37px;height:29.31px;line-height:29.31px;">0.1</div>
<div class="a dv" style="left:830.14px;top:528.65px;width:29.37px;height:29.31px;line-height:29.31px;">3.1</div>
<div class="a dv" style="left:859.51px;top:528.65px;width:29.37px;height:29.31px;line-height:29.31px;">2.1</div>
<div class="a dv" style="left:888.88px;top:528.65px;width:29.37px;height:29.31px;line-height:29.31px;">0.4</div>
<div class="a dv" style="left:918.25px;top:528.65px;width:29.37px;height:29.31px;line-height:29.31px;">0.1</div>
<div class="a dv" style="left:947.62px;top:528.65px;width:29.37px;height:29.31px;line-height:29.31px;"><0.1</div>
<div class="a dv" style="left:976.99px;top:528.65px;width:29.37px;height:29.31px;line-height:29.31px;">3.8</div>
<div class="a dv" style="left:1006.36px;top:528.65px;width:29.37px;height:29.31px;line-height:29.31px;">0.2</div>
<div class="a dv" style="left:1035.73px;top:528.65px;width:29.37px;height:29.31px;line-height:29.31px;">3.0</div>
<div class="a dv" style="left:1065.10px;top:528.65px;width:29.37px;height:29.31px;line-height:29.31px;">0.1</div>
<div class="a dv" style="left:1094.47px;top:528.65px;width:29.37px;height:29.31px;line-height:29.31px;">0.1</div>
<div class="a dv" style="left:1123.84px;top:528.65px;width:29.37px;height:29.31px;line-height:29.31px;"><0.1</div>
<div class="a dv" style="left:213.37px;top:557.96px;width:29.37px;height:29.31px;line-height:29.31px;">0.2</div>
<div class="a dv" style="left:242.74px;top:557.96px;width:29.37px;height:29.31px;line-height:29.31px;"><0.1</div>
<div class="a dv" style="left:389.59px;top:557.96px;width:29.37px;height:29.31px;line-height:29.31px;"><0.1</div>
<div class="a dv" style="left:536.44px;top:557.96px;width:29.37px;height:29.31px;line-height:29.31px;"><0.1</div>
<div class="a dv" style="left:712.66px;top:557.96px;width:29.37px;height:29.31px;line-height:29.31px;"><0.1</div>
<div class="a dv" style="left:742.03px;top:557.96px;width:29.37px;height:29.31px;line-height:29.31px;">0.9</div>
<div class="a dv" style="left:771.40px;top:557.96px;width:29.37px;height:29.31px;line-height:29.31px;"><0.1</div>
<div class="a dv" style="left:888.88px;top:557.96px;width:29.37px;height:29.31px;line-height:29.31px;"><0.1</div>
<div class="a dv" style="left:918.25px;top:557.96px;width:29.37px;height:29.31px;line-height:29.31px;"><0.1</div>
<div class="a dv" style="left:947.62px;top:557.96px;width:29.37px;height:29.31px;line-height:29.31px;">0.8</div>
<div class="a dv" style="left:976.99px;top:557.96px;width:29.37px;height:29.31px;line-height:29.31px;"><0.1</div>
<div class="a dv" style="left:1006.36px;top:557.96px;width:29.37px;height:29.31px;line-height:29.31px;">0.3</div>
<div class="a dv" style="left:1035.73px;top:557.96px;width:29.37px;height:29.31px;line-height:29.31px;">0.1</div>
<div class="a dv" style="left:1065.10px;top:557.96px;width:29.37px;height:29.31px;line-height:29.31px;">0.1</div>
<div class="a dv" style="left:1094.47px;top:557.96px;width:29.37px;height:29.31px;line-height:29.31px;"><0.1</div>
<div class="a dv" style="left:1123.84px;top:557.96px;width:29.37px;height:29.31px;line-height:29.31px;">0.2</div>
<div class="a dv" style="left:1182.58px;top:557.96px;width:29.37px;height:29.31px;line-height:29.31px;">1.2</div>
<div class="a dv" style="left:242.74px;top:587.27px;width:29.37px;height:29.31px;line-height:29.31px;">0.1</div>
<div class="a dv" style="left:448.33px;top:587.27px;width:29.37px;height:29.31px;line-height:29.31px;">0.1</div>
<div class="a dv" style="left:507.07px;top:587.27px;width:29.37px;height:29.31px;line-height:29.31px;">0.2</div>
<div class="a dv" style="left:536.44px;top:587.27px;width:29.37px;height:29.31px;line-height:29.31px;">0.1</div>
<div class="a dv" style="left:595.18px;top:587.27px;width:29.37px;height:29.31px;line-height:29.31px;">97.2</div>
<div class="a dv" style="left:624.55px;top:587.27px;width:29.37px;height:29.31px;line-height:29.31px;">0.2</div>
<div class="a dv" style="left:683.29px;top:587.27px;width:29.37px;height:29.31px;line-height:29.31px;">0.1</div>
<div class="a dv" style="left:712.66px;top:587.27px;width:29.37px;height:29.31px;line-height:29.31px;">0.5</div>
<div class="a dv" style="left:742.03px;top:587.27px;width:29.37px;height:29.31px;line-height:29.31px;"><0.1</div>
<div class="a dv" style="left:771.40px;top:587.27px;width:29.37px;height:29.31px;line-height:29.31px;">0.1</div>
<div class="a dv" style="left:830.14px;top:587.27px;width:29.37px;height:29.31px;line-height:29.31px;">93.9</div>
<div class="a dv" style="left:859.51px;top:587.27px;width:29.37px;height:29.31px;line-height:29.31px;">95.3</div>
<div class="a dv" style="left:888.88px;top:587.27px;width:29.37px;height:29.31px;line-height:29.31px;">0.1</div>
<div class="a dv" style="left:918.25px;top:587.27px;width:29.37px;height:29.31px;line-height:29.31px;">0.2</div>
<div class="a dv" style="left:947.62px;top:587.27px;width:29.37px;height:29.31px;line-height:29.31px;">0.1</div>
<div class="a dv" style="left:976.99px;top:587.27px;width:29.37px;height:29.31px;line-height:29.31px;">91.0</div>
<div class="a dv" style="left:1006.36px;top:587.27px;width:29.37px;height:29.31px;line-height:29.31px;">4.4</div>
<div class="a dv" style="left:1035.73px;top:587.27px;width:29.37px;height:29.31px;line-height:29.31px;">0.3</div>
<div class="a dv" style="left:1065.10px;top:587.27px;width:29.37px;height:29.31px;line-height:29.31px;">4.6</div>
<div class="a dv" style="left:1094.47px;top:587.27px;width:29.37px;height:29.31px;line-height:29.31px;">0.1</div>
<div class="a dv" style="left:213.37px;top:616.58px;width:29.37px;height:29.31px;line-height:29.31px;">0.1</div>
<div class="a dv" style="left:330.85px;top:616.58px;width:29.37px;height:29.31px;line-height:29.31px;">0.1</div>
<div class="a dv" style="left:360.22px;top:616.58px;width:29.37px;height:29.31px;line-height:29.31px;"><0.1</div>
<div class="a dv" style="left:389.59px;top:616.58px;width:29.37px;height:29.31px;line-height:29.31px;">0.1</div>
<div class="a dv" style="left:624.55px;top:616.58px;width:29.37px;height:29.31px;line-height:29.31px;">0.1</div>
<div class="a dv" style="left:712.66px;top:616.58px;width:29.37px;height:29.31px;line-height:29.31px;"><0.1</div>
<div class="a dv" style="left:771.40px;top:616.58px;width:29.37px;height:29.31px;line-height:29.31px;"><0.1</div>
<div class="a dv" style="left:888.88px;top:616.58px;width:29.37px;height:29.31px;line-height:29.31px;">1.3</div>
<div class="a dv" style="left:918.25px;top:616.58px;width:29.37px;height:29.31px;line-height:29.31px;">0.5</div>
<div class="a dv" style="left:976.99px;top:616.58px;width:29.37px;height:29.31px;line-height:29.31px;"><0.1</div>
<div class="a dv" style="left:1006.36px;top:616.58px;width:29.37px;height:29.31px;line-height:29.31px;">0.3</div>
<div class="a dv" style="left:1035.73px;top:616.58px;width:29.37px;height:29.31px;line-height:29.31px;">0.1</div>
<div class="a dv" style="left:1065.10px;top:616.58px;width:29.37px;height:29.31px;line-height:29.31px;">0.2</div>
<div class="a dv" style="left:1123.84px;top:616.58px;width:29.37px;height:29.31px;line-height:29.31px;">94.6</div>
<div class="a dv" style="left:1182.58px;top:616.58px;width:29.37px;height:29.31px;line-height:29.31px;">0.1</div>
<div class="a dv" style="left:242.74px;top:645.89px;width:29.37px;height:29.31px;line-height:29.31px;">0.1</div>
<div class="a dv" style="left:301.48px;top:645.89px;width:29.37px;height:29.31px;line-height:29.31px;">0.4</div>
<div class="a dv" style="left:360.22px;top:645.89px;width:29.37px;height:29.31px;line-height:29.31px;"><0.1</div>
<div class="a dv" style="left:389.59px;top:645.89px;width:29.37px;height:29.31px;line-height:29.31px;"><0.1</div>
<div class="a dv" style="left:448.33px;top:645.89px;width:29.37px;height:29.31px;line-height:29.31px;"><0.1</div>
<div class="a dv" style="left:712.66px;top:645.89px;width:29.37px;height:29.31px;line-height:29.31px;">0.6</div>
<div class="a dv" style="left:742.03px;top:645.89px;width:29.37px;height:29.31px;line-height:29.31px;">92.2</div>
<div class="a dv" style="left:771.40px;top:645.89px;width:29.37px;height:29.31px;line-height:29.31px;">0.6</div>
<div class="a dv" style="left:859.51px;top:645.89px;width:29.37px;height:29.31px;line-height:29.31px;"><0.1</div>
<div class="a dv" style="left:888.88px;top:645.89px;width:29.37px;height:29.31px;line-height:29.31px;">0.7</div>
<div class="a dv" style="left:918.25px;top:645.89px;width:29.37px;height:29.31px;line-height:29.31px;">0.6</div>
<div class="a dv" style="left:947.62px;top:645.89px;width:29.37px;height:29.31px;line-height:29.31px;">94.1</div>
<div class="a dv" style="left:976.99px;top:645.89px;width:29.37px;height:29.31px;line-height:29.31px;"><0.1</div>
<div class="a dv" style="left:1006.36px;top:645.89px;width:29.37px;height:29.31px;line-height:29.31px;">2.5</div>
<div class="a dv" style="left:1035.73px;top:645.89px;width:29.37px;height:29.31px;line-height:29.31px;">0.7</div>
<div class="a dv" style="left:1065.10px;top:645.89px;width:29.37px;height:29.31px;line-height:29.31px;">0.7</div>
<div class="a dv" style="left:1094.47px;top:645.89px;width:29.37px;height:29.31px;line-height:29.31px;">0.2</div>
<div class="a dv" style="left:1182.58px;top:645.89px;width:29.37px;height:29.31px;line-height:29.31px;"><0.1</div>
<div class="a dv" style="left:242.74px;top:675.20px;width:29.37px;height:29.31px;line-height:29.31px;">0.1</div>
<div class="a dv" style="left:330.85px;top:675.20px;width:29.37px;height:29.31px;line-height:29.31px;">0.1</div>
<div class="a dv" style="left:595.18px;top:675.20px;width:29.37px;height:29.31px;line-height:29.31px;"><0.1</div>
<div class="a dv" style="left:624.55px;top:675.20px;width:29.37px;height:29.31px;line-height:29.31px;">37.1</div>
<div class="a dv" style="left:653.92px;top:675.20px;width:29.37px;height:29.31px;line-height:29.31px;">0.1</div>
<div class="a dv" style="left:712.66px;top:675.20px;width:29.37px;height:29.31px;line-height:29.31px;">2.5</div>
<div class="a dv" style="left:771.40px;top:675.20px;width:29.37px;height:29.31px;line-height:29.31px;"><0.1</div>
<div class="a dv" style="left:830.14px;top:675.20px;width:29.37px;height:29.31px;line-height:29.31px;"><0.1</div>
<div class="a dv" style="left:859.51px;top:675.20px;width:29.37px;height:29.31px;line-height:29.31px;">0.1</div>
<div class="a dv" style="left:888.88px;top:675.20px;width:29.37px;height:29.31px;line-height:29.31px;">1.3</div>
<div class="a dv" style="left:918.25px;top:675.20px;width:29.37px;height:29.31px;line-height:29.31px;">2.2</div>
<div class="a dv" style="left:947.62px;top:675.20px;width:29.37px;height:29.31px;line-height:29.31px;"><0.1</div>
<div class="a dv" style="left:976.99px;top:675.20px;width:29.37px;height:29.31px;line-height:29.31px;">0.1</div>
<div class="a dv" style="left:1006.36px;top:675.20px;width:29.37px;height:29.31px;line-height:29.31px;">0.2</div>
<div class="a dv" style="left:1035.73px;top:675.20px;width:29.37px;height:29.31px;line-height:29.31px;">86.4</div>
<div class="a dv" style="left:1065.10px;top:675.20px;width:29.37px;height:29.31px;line-height:29.31px;">0.1</div>
<div class="a dv" style="left:1123.84px;top:675.20px;width:29.37px;height:29.31px;line-height:29.31px;"><0.1</div>
<div class="a dv" style="left:213.37px;top:704.51px;width:29.37px;height:29.31px;line-height:29.31px;"><0.1</div>
<div class="a dv" style="left:242.74px;top:704.51px;width:29.37px;height:29.31px;line-height:29.31px;">0.1</div>
<div class="a dv" style="left:272.11px;top:704.51px;width:29.37px;height:29.31px;line-height:29.31px;">98.7</div>
<div class="a dv" style="left:330.85px;top:704.51px;width:29.37px;height:29.31px;line-height:29.31px;">0.1</div>
<div class="a dv" style="left:360.22px;top:704.51px;width:29.37px;height:29.31px;line-height:29.31px;">0.2</div>
<div class="a dv" style="left:389.59px;top:704.51px;width:29.37px;height:29.31px;line-height:29.31px;">0.2</div>
<div class="a dv" style="left:418.96px;top:704.51px;width:29.37px;height:29.31px;line-height:29.31px;">0.1</div>
<div class="a dv" style="left:448.33px;top:704.51px;width:29.37px;height:29.31px;line-height:29.31px;">1.9</div>
<div class="a dv" style="left:477.70px;top:704.51px;width:29.37px;height:29.31px;line-height:29.31px;">0.1</div>
<div class="a dv" style="left:507.07px;top:704.51px;width:29.37px;height:29.31px;line-height:29.31px;">1.3</div>
<div class="a dv" style="left:565.81px;top:704.51px;width:29.37px;height:29.31px;line-height:29.31px;">0.2</div>
<div class="a dv" style="left:624.55px;top:704.51px;width:29.37px;height:29.31px;line-height:29.31px;">0.2</div>
<div class="a dv" style="left:712.66px;top:704.51px;width:29.37px;height:29.31px;line-height:29.31px;"><0.1</div>
<div class="a dv" style="left:742.03px;top:704.51px;width:29.37px;height:29.31px;line-height:29.31px;">2.4</div>
<div class="a dv" style="left:771.40px;top:704.51px;width:29.37px;height:29.31px;line-height:29.31px;">0.1</div>
<div class="a dv" style="left:830.14px;top:704.51px;width:29.37px;height:29.31px;line-height:29.31px;"><0.1</div>
<div class="a dv" style="left:859.51px;top:704.51px;width:29.37px;height:29.31px;line-height:29.31px;"><0.1</div>
<div class="a dv" style="left:888.88px;top:704.51px;width:29.37px;height:29.31px;line-height:29.31px;">0.1</div>
<div class="a dv" style="left:918.25px;top:704.51px;width:29.37px;height:29.31px;line-height:29.31px;"><0.1</div>
<div class="a dv" style="left:947.62px;top:704.51px;width:29.37px;height:29.31px;line-height:29.31px;">1.8</div>
<div class="a dv" style="left:976.99px;top:704.51px;width:29.37px;height:29.31px;line-height:29.31px;"><0.1</div>
<div class="a dv" style="left:1006.36px;top:704.51px;width:29.37px;height:29.31px;line-height:29.31px;">0.2</div>
<div class="a dv" style="left:1035.73px;top:704.51px;width:29.37px;height:29.31px;line-height:29.31px;">0.2</div>
<div class="a dv" style="left:1065.10px;top:704.51px;width:29.37px;height:29.31px;line-height:29.31px;">0.3</div>
<div class="a dv" style="left:1094.47px;top:704.51px;width:29.37px;height:29.31px;line-height:29.31px;">0.4</div>
<div class="a dv" style="left:1123.84px;top:704.51px;width:29.37px;height:29.31px;line-height:29.31px;">0.2</div>
<div class="a dv" style="left:1182.58px;top:704.51px;width:29.37px;height:29.31px;line-height:29.31px;">0.2</div>
<div class="a dv" style="left:242.74px;top:733.82px;width:29.37px;height:29.31px;line-height:29.31px;"><0.1</div>
<div class="a dv" style="left:272.11px;top:733.82px;width:29.37px;height:29.31px;line-height:29.31px;">0.2</div>
<div class="a dv" style="left:301.48px;top:733.82px;width:29.37px;height:29.31px;line-height:29.31px;"><0.1</div>
<div class="a dv" style="left:448.33px;top:733.82px;width:29.37px;height:29.31px;line-height:29.31px;">1.0</div>
<div class="a dv" style="left:507.07px;top:733.82px;width:29.37px;height:29.31px;line-height:29.31px;">0.3</div>
<div class="a dv" style="left:624.55px;top:733.82px;width:29.37px;height:29.31px;line-height:29.31px;">0.4</div>
<div class="a dv" style="left:653.92px;top:733.82px;width:29.37px;height:29.31px;line-height:29.31px;">0.2</div>
<div class="a dv" style="left:712.66px;top:733.82px;width:29.37px;height:29.31px;line-height:29.31px;">0.8</div>
<div class="a dv" style="left:742.03px;top:733.82px;width:29.37px;height:29.31px;line-height:29.31px;">1.1</div>
<div class="a dv" style="left:771.40px;top:733.82px;width:29.37px;height:29.31px;line-height:29.31px;">0.1</div>
<div class="a dv" style="left:830.14px;top:733.82px;width:29.37px;height:29.31px;line-height:29.31px;"><0.1</div>
<div class="a dv" style="left:888.88px;top:733.82px;width:29.37px;height:29.31px;line-height:29.31px;"><0.1</div>
<div class="a dv" style="left:918.25px;top:733.82px;width:29.37px;height:29.31px;line-height:29.31px;"><0.1</div>
<div class="a dv" style="left:947.62px;top:733.82px;width:29.37px;height:29.31px;line-height:29.31px;">0.3</div>
<div class="a dv" style="left:1006.36px;top:733.82px;width:29.37px;height:29.31px;line-height:29.31px;">0.1</div>
<div class="a dv" style="left:1035.73px;top:733.82px;width:29.37px;height:29.31px;line-height:29.31px;">0.1</div>
<div class="a dv" style="left:1065.10px;top:733.82px;width:29.37px;height:29.31px;line-height:29.31px;"><0.1</div>
<div class="a dv" style="left:1094.47px;top:733.82px;width:29.37px;height:29.31px;line-height:29.31px;">0.2</div>
<div class="a dv" style="left:213.37px;top:763.13px;width:29.37px;height:29.31px;line-height:29.31px;">0.1</div>
<div class="a dv" style="left:301.48px;top:763.13px;width:29.37px;height:29.31px;line-height:29.31px;">0.2</div>
<div class="a dv" style="left:624.55px;top:763.13px;width:29.37px;height:29.31px;line-height:29.31px;">0.3</div>
<div class="a dv" style="left:712.66px;top:763.13px;width:29.37px;height:29.31px;line-height:29.31px;">0.5</div>
<div class="a dv" style="left:742.03px;top:763.13px;width:29.37px;height:29.31px;line-height:29.31px;">0.1</div>
<div class="a dv" style="left:771.40px;top:763.13px;width:29.37px;height:29.31px;line-height:29.31px;">0.3</div>
<div class="a dv" style="left:859.51px;top:763.13px;width:29.37px;height:29.31px;line-height:29.31px;">0.1</div>
<div class="a dv" style="left:888.88px;top:763.13px;width:29.37px;height:29.31px;line-height:29.31px;">75.9</div>
<div class="a dv" style="left:918.25px;top:763.13px;width:29.37px;height:29.31px;line-height:29.31px;">87.7</div>
<div class="a dv" style="left:947.62px;top:763.13px;width:29.37px;height:29.31px;line-height:29.31px;">0.1</div>
<div class="a dv" style="left:976.99px;top:763.13px;width:29.37px;height:29.31px;line-height:29.31px;">0.1</div>
<div class="a dv" style="left:1006.36px;top:763.13px;width:29.37px;height:29.31px;line-height:29.31px;">2.0</div>
<div class="a dv" style="left:1035.73px;top:763.13px;width:29.37px;height:29.31px;line-height:29.31px;">1.7</div>
<div class="a dv" style="left:1065.10px;top:763.13px;width:29.37px;height:29.31px;line-height:29.31px;">3.5</div>
<div class="a dv" style="left:1123.84px;top:763.13px;width:29.37px;height:29.31px;line-height:29.31px;">1.4</div>
<div class="a dv" style="left:1182.58px;top:763.13px;width:29.37px;height:29.31px;line-height:29.31px;">0.1</div>
<div class="a dv" style="left:213.37px;top:792.44px;width:29.37px;height:29.31px;line-height:29.31px;"><0.1</div>
<div class="a dv" style="left:272.11px;top:792.44px;width:29.37px;height:29.31px;line-height:29.31px;">0.2</div>
<div class="a dv" style="left:301.48px;top:792.44px;width:29.37px;height:29.31px;line-height:29.31px;">0.1</div>
<div class="a dv" style="left:330.85px;top:792.44px;width:29.37px;height:29.31px;line-height:29.31px;">0.1</div>
<div class="a dv" style="left:360.22px;top:792.44px;width:29.37px;height:29.31px;line-height:29.31px;">93.3</div>
<div class="a dv" style="left:389.59px;top:792.44px;width:29.37px;height:29.31px;line-height:29.31px;">98.7</div>
<div class="a dv" style="left:418.96px;top:792.44px;width:29.37px;height:29.31px;line-height:29.31px;">0.3</div>
<div class="a dv" style="left:477.70px;top:792.44px;width:29.37px;height:29.31px;line-height:29.31px;">0.2</div>
<div class="a dv" style="left:536.44px;top:792.44px;width:29.37px;height:29.31px;line-height:29.31px;">0.2</div>
<div class="a dv" style="left:565.81px;top:792.44px;width:29.37px;height:29.31px;line-height:29.31px;">99.3</div>
<div class="a dv" style="left:624.55px;top:792.44px;width:29.37px;height:29.31px;line-height:29.31px;"><0.1</div>
<div class="a dv" style="left:653.92px;top:792.44px;width:29.37px;height:29.31px;line-height:29.31px;">0.4</div>
<div class="a dv" style="left:683.29px;top:792.44px;width:29.37px;height:29.31px;line-height:29.31px;">0.1</div>
<div class="a dv" style="left:712.66px;top:792.44px;width:29.37px;height:29.31px;line-height:29.31px;"><0.1</div>
<div class="a dv" style="left:771.40px;top:792.44px;width:29.37px;height:29.31px;line-height:29.31px;">2.7</div>
<div class="a dv" style="left:888.88px;top:792.44px;width:29.37px;height:29.31px;line-height:29.31px;">0.1</div>
<div class="a dv" style="left:918.25px;top:792.44px;width:29.37px;height:29.31px;line-height:29.31px;"><0.1</div>
<div class="a dv" style="left:947.62px;top:792.44px;width:29.37px;height:29.31px;line-height:29.31px;"><0.1</div>
<div class="a dv" style="left:976.99px;top:792.44px;width:29.37px;height:29.31px;line-height:29.31px;"><0.1</div>
<div class="a dv" style="left:1006.36px;top:792.44px;width:29.37px;height:29.31px;line-height:29.31px;">0.1</div>
<div class="a dv" style="left:1035.73px;top:792.44px;width:29.37px;height:29.31px;line-height:29.31px;"><0.1</div>
<div class="a dv" style="left:1065.10px;top:792.44px;width:29.37px;height:29.31px;line-height:29.31px;">0.3</div>
<div class="a dv" style="left:1123.84px;top:792.44px;width:29.37px;height:29.31px;line-height:29.31px;">0.1</div>
<div class="a dv" style="left:184.00px;top:821.75px;width:29.37px;height:29.31px;line-height:29.31px;"><0.1</div>
<div class="a dv" style="left:242.74px;top:821.75px;width:29.37px;height:29.31px;line-height:29.31px;"><0.1</div>
<div class="a dv" style="left:272.11px;top:821.75px;width:29.37px;height:29.31px;line-height:29.31px;"><0.1</div>
<div class="a dv" style="left:330.85px;top:821.75px;width:29.37px;height:29.31px;line-height:29.31px;">99.3</div>
<div class="a dv" style="left:360.22px;top:821.75px;width:29.37px;height:29.31px;line-height:29.31px;">0.1</div>
<div class="a dv" style="left:448.33px;top:821.75px;width:29.37px;height:29.31px;line-height:29.31px;"><0.1</div>
<div class="a dv" style="left:565.81px;top:821.75px;width:29.37px;height:29.31px;line-height:29.31px;">0.1</div>
<div class="a dv" style="left:595.18px;top:821.75px;width:29.37px;height:29.31px;line-height:29.31px;"><0.1</div>
<div class="a dv" style="left:624.55px;top:821.75px;width:29.37px;height:29.31px;line-height:29.31px;">55.6</div>
<div class="a dv" style="left:712.66px;top:821.75px;width:29.37px;height:29.31px;line-height:29.31px;"><0.1</div>
<div class="a dv" style="left:830.14px;top:821.75px;width:29.37px;height:29.31px;line-height:29.31px;"><0.1</div>
<div class="a dv" style="left:859.51px;top:821.75px;width:29.37px;height:29.31px;line-height:29.31px;">0.1</div>
<div class="a dv" style="left:888.88px;top:821.75px;width:29.37px;height:29.31px;line-height:29.31px;">0.1</div>
<div class="a dv" style="left:918.25px;top:821.75px;width:29.37px;height:29.31px;line-height:29.31px;">0.1</div>
<div class="a dv" style="left:976.99px;top:821.75px;width:29.37px;height:29.31px;line-height:29.31px;">0.1</div>
<div class="a dv" style="left:1006.36px;top:821.75px;width:29.37px;height:29.31px;line-height:29.31px;"><0.1</div>
<div class="a dv" style="left:1035.73px;top:821.75px;width:29.37px;height:29.31px;line-height:29.31px;">1.8</div>
<div class="a dv" style="left:1123.84px;top:821.75px;width:29.37px;height:29.31px;line-height:29.31px;">2.0</div>
<div class="a dv" style="left:272.11px;top:851.06px;width:29.37px;height:29.31px;line-height:29.31px;">0.1</div>
<div class="a dv" style="left:330.85px;top:851.06px;width:29.37px;height:29.31px;line-height:29.31px;">0.2</div>
<div class="a dv" style="left:360.22px;top:851.06px;width:29.37px;height:29.31px;line-height:29.31px;">0.2</div>
<div class="a dv" style="left:389.59px;top:851.06px;width:29.37px;height:29.31px;line-height:29.31px;">0.1</div>
<div class="a dv" style="left:565.81px;top:851.06px;width:29.37px;height:29.31px;line-height:29.31px;">0.1</div>
<div class="a dv" style="left:595.18px;top:851.06px;width:29.37px;height:29.31px;line-height:29.31px;">0.6</div>
<div class="a dv" style="left:624.55px;top:851.06px;width:29.37px;height:29.31px;line-height:29.31px;">0.9</div>
<div class="a dv" style="left:653.92px;top:851.06px;width:29.37px;height:29.31px;line-height:29.31px;">0.2</div>
<div class="a dv" style="left:712.66px;top:851.06px;width:29.37px;height:29.31px;line-height:29.31px;">76.9</div>
<div class="a dv" style="left:771.40px;top:851.06px;width:29.37px;height:29.31px;line-height:29.31px;"><0.1</div>
<div class="a dv" style="left:830.14px;top:851.06px;width:29.37px;height:29.31px;line-height:29.31px;">0.6</div>
<div class="a dv" style="left:859.51px;top:851.06px;width:29.37px;height:29.31px;line-height:29.31px;">0.8</div>
<div class="a dv" style="left:888.88px;top:851.06px;width:29.37px;height:29.31px;line-height:29.31px;">0.2</div>
<div class="a dv" style="left:918.25px;top:851.06px;width:29.37px;height:29.31px;line-height:29.31px;">0.5</div>
<div class="a dv" style="left:947.62px;top:851.06px;width:29.37px;height:29.31px;line-height:29.31px;"><0.1</div>
<div class="a dv" style="left:976.99px;top:851.06px;width:29.37px;height:29.31px;line-height:29.31px;">1.6</div>
<div class="a dv" style="left:1006.36px;top:851.06px;width:29.37px;height:29.31px;line-height:29.31px;">5.0</div>
<div class="a dv" style="left:1035.73px;top:851.06px;width:29.37px;height:29.31px;line-height:29.31px;">2.8</div>
<div class="a dv" style="left:1065.10px;top:851.06px;width:29.37px;height:29.31px;line-height:29.31px;">3.3</div>
<div class="a dv" style="left:1123.84px;top:851.06px;width:29.37px;height:29.31px;line-height:29.31px;">0.3</div>
<div class="a dv" style="left:184.00px;top:880.37px;width:29.37px;height:29.31px;line-height:29.31px;">97.7</div>
<div class="a dv" style="left:213.37px;top:880.37px;width:29.37px;height:29.31px;line-height:29.31px;">5.6</div>
<div class="a dv" style="left:301.48px;top:880.37px;width:29.37px;height:29.31px;line-height:29.31px;">0.8</div>
<div class="a dv" style="left:360.22px;top:880.37px;width:29.37px;height:29.31px;line-height:29.31px;">2.7</div>
<div class="a dv" style="left:389.59px;top:880.37px;width:29.37px;height:29.31px;line-height:29.31px;">0.5</div>
<div class="a dv" style="left:418.96px;top:880.37px;width:29.37px;height:29.31px;line-height:29.31px;">98.9</div>
<div class="a dv" style="left:477.70px;top:880.37px;width:29.37px;height:29.31px;line-height:29.31px;">99.0</div>
<div class="a dv" style="left:536.44px;top:880.37px;width:29.37px;height:29.31px;line-height:29.31px;">0.4</div>
<div class="a dv" style="left:565.81px;top:880.37px;width:29.37px;height:29.31px;line-height:29.31px;">0.1</div>
<div class="a dv" style="left:624.55px;top:880.37px;width:29.37px;height:29.31px;line-height:29.31px;">0.1</div>
<div class="a dv" style="left:653.92px;top:880.37px;width:29.37px;height:29.31px;line-height:29.31px;">0.2</div>
<div class="a dv" style="left:683.29px;top:880.37px;width:29.37px;height:29.31px;line-height:29.31px;">0.1</div>
<div class="a dv" style="left:712.66px;top:880.37px;width:29.37px;height:29.31px;line-height:29.31px;">7.7</div>
<div class="a dv" style="left:742.03px;top:880.37px;width:29.37px;height:29.31px;line-height:29.31px;">0.1</div>
<div class="a dv" style="left:771.40px;top:880.37px;width:29.37px;height:29.31px;line-height:29.31px;">7.3</div>
<div class="a dv" style="left:830.14px;top:880.37px;width:29.37px;height:29.31px;line-height:29.31px;">0.1</div>
<div class="a dv" style="left:859.51px;top:880.37px;width:29.37px;height:29.31px;line-height:29.31px;">0.1</div>
<div class="a dv" style="left:888.88px;top:880.37px;width:29.37px;height:29.31px;line-height:29.31px;">4.5</div>
<div class="a dv" style="left:918.25px;top:880.37px;width:29.37px;height:29.31px;line-height:29.31px;">2.0</div>
<div class="a dv" style="left:947.62px;top:880.37px;width:29.37px;height:29.31px;line-height:29.31px;">0.3</div>
<div class="a dv" style="left:976.99px;top:880.37px;width:29.37px;height:29.31px;line-height:29.31px;">0.1</div>
<div class="a dv" style="left:1006.36px;top:880.37px;width:29.37px;height:29.31px;line-height:29.31px;">74.4</div>
<div class="a dv" style="left:1035.73px;top:880.37px;width:29.37px;height:29.31px;line-height:29.31px;">0.1</div>
<div class="a dv" style="left:1065.10px;top:880.37px;width:29.37px;height:29.31px;line-height:29.31px;">81.4</div>
<div class="a dv" style="left:1123.84px;top:880.37px;width:29.37px;height:29.31px;line-height:29.31px;">0.1</div>
<div class="a dv" style="left:1182.58px;top:880.37px;width:29.37px;height:29.31px;line-height:29.31px;">0.1</div>
<div class="a dv" style="left:242.74px;top:909.68px;width:29.37px;height:29.31px;line-height:29.31px;"><0.1</div>
<div class="a dv" style="left:301.48px;top:909.68px;width:29.37px;height:29.31px;line-height:29.31px;">97.7</div>
<div class="a dv" style="left:360.22px;top:909.68px;width:29.37px;height:29.31px;line-height:29.31px;">0.8</div>
<div class="a dv" style="left:389.59px;top:909.68px;width:29.37px;height:29.31px;line-height:29.31px;">0.2</div>
<div class="a dv" style="left:418.96px;top:909.68px;width:29.37px;height:29.31px;line-height:29.31px;">0.1</div>
<div class="a dv" style="left:477.70px;top:909.68px;width:29.37px;height:29.31px;line-height:29.31px;">0.2</div>
<div class="a dv" style="left:507.07px;top:909.68px;width:29.37px;height:29.31px;line-height:29.31px;"><0.1</div>
<div class="a dv" style="left:536.44px;top:909.68px;width:29.37px;height:29.31px;line-height:29.31px;">0.4</div>
<div class="a dv" style="left:565.81px;top:909.68px;width:29.37px;height:29.31px;line-height:29.31px;">0.1</div>
<div class="a dv" style="left:595.18px;top:909.68px;width:29.37px;height:29.31px;line-height:29.31px;"><0.1</div>
<div class="a dv" style="left:624.55px;top:909.68px;width:29.37px;height:29.31px;line-height:29.31px;">0.3</div>
<div class="a dv" style="left:653.92px;top:909.68px;width:29.37px;height:29.31px;line-height:29.31px;">98.2</div>
<div class="a dv" style="left:683.29px;top:909.68px;width:29.37px;height:29.31px;line-height:29.31px;">0.5</div>
<div class="a dv" style="left:712.66px;top:909.68px;width:29.37px;height:29.31px;line-height:29.31px;">9.7</div>
<div class="a dv" style="left:742.03px;top:909.68px;width:29.37px;height:29.31px;line-height:29.31px;">0.2</div>
<div class="a dv" style="left:771.40px;top:909.68px;width:29.37px;height:29.31px;line-height:29.31px;">85.9</div>
<div class="a dv" style="left:830.14px;top:909.68px;width:29.37px;height:29.31px;line-height:29.31px;">0.1</div>
<div class="a dv" style="left:859.51px;top:909.68px;width:29.37px;height:29.31px;line-height:29.31px;">0.1</div>
<div class="a dv" style="left:888.88px;top:909.68px;width:29.37px;height:29.31px;line-height:29.31px;">2.6</div>
<div class="a dv" style="left:918.25px;top:909.68px;width:29.37px;height:29.31px;line-height:29.31px;">0.6</div>
<div class="a dv" style="left:947.62px;top:909.68px;width:29.37px;height:29.31px;line-height:29.31px;">0.2</div>
<div class="a dv" style="left:976.99px;top:909.68px;width:29.37px;height:29.31px;line-height:29.31px;"><0.1</div>
<div class="a dv" style="left:1006.36px;top:909.68px;width:29.37px;height:29.31px;line-height:29.31px;">6.5</div>
<div class="a dv" style="left:1035.73px;top:909.68px;width:29.37px;height:29.31px;line-height:29.31px;">0.9</div>
<div class="a dv" style="left:1065.10px;top:909.68px;width:29.37px;height:29.31px;line-height:29.31px;">3.6</div>
<div class="a dv" style="left:1094.47px;top:909.68px;width:29.37px;height:29.31px;line-height:29.31px;"><0.1</div>
<div class="a dv" style="left:1123.84px;top:909.68px;width:29.37px;height:29.31px;line-height:29.31px;"><0.1</div>
<div class="a dv" style="left:242.74px;top:938.99px;width:29.37px;height:29.31px;line-height:29.31px;">9.8</div>
<div class="a dv" style="left:272.11px;top:938.99px;width:29.37px;height:29.31px;line-height:29.31px;">0.9</div>
<div class="a dv" style="left:301.48px;top:938.99px;width:29.37px;height:29.31px;line-height:29.31px;"><0.1</div>
<div class="a dv" style="left:360.22px;top:938.99px;width:29.37px;height:29.31px;line-height:29.31px;">0.1</div>
<div class="a dv" style="left:389.59px;top:938.99px;width:29.37px;height:29.31px;line-height:29.31px;"><0.1</div>
<div class="a dv" style="left:448.33px;top:938.99px;width:29.37px;height:29.31px;line-height:29.31px;">96.2</div>
<div class="a dv" style="left:507.07px;top:938.99px;width:29.37px;height:29.31px;line-height:29.31px;">96.9</div>
<div class="a dv" style="left:536.44px;top:938.99px;width:29.37px;height:29.31px;line-height:29.31px;">0.3</div>
<div class="a dv" style="left:595.18px;top:938.99px;width:29.37px;height:29.31px;line-height:29.31px;"><0.1</div>
<div class="a dv" style="left:624.55px;top:938.99px;width:29.37px;height:29.31px;line-height:29.31px;"><0.1</div>
<div class="a dv" style="left:653.92px;top:938.99px;width:29.37px;height:29.31px;line-height:29.31px;"><0.1</div>
<div class="a dv" style="left:683.29px;top:938.99px;width:29.37px;height:29.31px;line-height:29.31px;">0.5</div>
<div class="a dv" style="left:712.66px;top:938.99px;width:29.37px;height:29.31px;line-height:29.31px;">0.1</div>
<div class="a dv" style="left:742.03px;top:938.99px;width:29.37px;height:29.31px;line-height:29.31px;">3.0</div>
<div class="a dv" style="left:771.40px;top:938.99px;width:29.37px;height:29.31px;line-height:29.31px;">0.1</div>
<div class="a dv" style="left:830.14px;top:938.99px;width:29.37px;height:29.31px;line-height:29.31px;">0.6</div>
<div class="a dv" style="left:859.51px;top:938.99px;width:29.37px;height:29.31px;line-height:29.31px;">0.2</div>
<div class="a dv" style="left:888.88px;top:938.99px;width:29.37px;height:29.31px;line-height:29.31px;">0.1</div>
<div class="a dv" style="left:918.25px;top:938.99px;width:29.37px;height:29.31px;line-height:29.31px;">0.2</div>
<div class="a dv" style="left:947.62px;top:938.99px;width:29.37px;height:29.31px;line-height:29.31px;">2.3</div>
<div class="a dv" style="left:976.99px;top:938.99px;width:29.37px;height:29.31px;line-height:29.31px;">0.6</div>
<div class="a dv" style="left:1006.36px;top:938.99px;width:29.37px;height:29.31px;line-height:29.31px;">0.5</div>
<div class="a dv" style="left:1035.73px;top:938.99px;width:29.37px;height:29.31px;line-height:29.31px;">0.1</div>
<div class="a dv" style="left:1065.10px;top:938.99px;width:29.37px;height:29.31px;line-height:29.31px;">0.3</div>
<div class="a dv" style="left:1094.47px;top:938.99px;width:29.37px;height:29.31px;line-height:29.31px;">98.6</div>
<div class="a dv" style="left:1123.84px;top:938.99px;width:29.37px;height:29.31px;line-height:29.31px;"><0.1</div>
<div class="a dv" style="left:418.96px;top:968.30px;width:29.37px;height:29.31px;line-height:29.31px;"><0.1</div>
<div class="a dv" style="left:595.18px;top:968.30px;width:29.37px;height:29.31px;line-height:29.31px;"><0.1</div>
<div class="a dv" style="left:624.55px;top:968.30px;width:29.37px;height:29.31px;line-height:29.31px;"><0.1</div>
<div class="a dv" style="left:712.66px;top:968.30px;width:29.37px;height:29.31px;line-height:29.31px;">0.3</div>
<div class="a dv" style="left:830.14px;top:968.30px;width:29.37px;height:29.31px;line-height:29.31px;">0.2</div>
<div class="a dv" style="left:976.99px;top:968.30px;width:29.37px;height:29.31px;line-height:29.31px;"><0.1</div>
<div class="a dv" style="left:1006.36px;top:968.30px;width:29.37px;height:29.31px;line-height:29.31px;"><0.1</div>
<div class="a dv" style="left:1153.21px;top:968.30px;width:29.37px;height:29.31px;line-height:29.31px;">100.0</div>
<div class="a dv" style="left:213.37px;top:997.61px;width:29.37px;height:29.31px;line-height:29.31px;">92.5</div>
<div class="a dv" style="left:624.55px;top:997.61px;width:29.37px;height:29.31px;line-height:29.31px;"><0.1</div>
<div class="a dv" style="left:712.66px;top:997.61px;width:29.37px;height:29.31px;line-height:29.31px;"><0.1</div>
<div class="a dv" style="left:771.40px;top:997.61px;width:29.37px;height:29.31px;line-height:29.31px;"><0.1</div>
<div class="a dv" style="left:888.88px;top:997.61px;width:29.37px;height:29.31px;line-height:29.31px;">0.8</div>
<div class="a dv" style="left:918.25px;top:997.61px;width:29.37px;height:29.31px;line-height:29.31px;">0.5</div>
<div class="a dv" style="left:947.62px;top:997.61px;width:29.37px;height:29.31px;line-height:29.31px;"><0.1</div>
<div class="a dv" style="left:976.99px;top:997.61px;width:29.37px;height:29.31px;line-height:29.31px;"><0.1</div>
<div class="a dv" style="left:1006.36px;top:997.61px;width:29.37px;height:29.31px;line-height:29.31px;">0.4</div>
<div class="a dv" style="left:1035.73px;top:997.61px;width:29.37px;height:29.31px;line-height:29.31px;">1.3</div>
<div class="a dv" style="left:1065.10px;top:997.61px;width:29.37px;height:29.31px;line-height:29.31px;">0.2</div>
<div class="a dv" style="left:1123.84px;top:997.61px;width:29.37px;height:29.31px;line-height:29.31px;">1.0</div>
<div class="a dv" style="left:1182.58px;top:997.61px;width:29.37px;height:29.31px;line-height:29.31px;">97.4</div>
<div class="a dv" style="left:184.00px;top:1026.92px;width:29.37px;height:29.31px;line-height:29.31px;">2.2</div>
<div class="a dv" style="left:213.37px;top:1026.92px;width:29.37px;height:29.31px;line-height:29.31px;">1.3</div>
<div class="a dv" style="left:947.62px;top:1026.92px;width:29.37px;height:29.31px;line-height:29.31px;"><0.1</div>
<div class="a dv" style="left:976.99px;top:1026.92px;width:29.37px;height:29.31px;line-height:29.31px;">0.2</div>
<div class="a dv" style="left:1006.36px;top:1026.92px;width:29.37px;height:29.31px;line-height:29.31px;">0.3</div>
<div class="a dv" style="left:1035.73px;top:1026.92px;width:29.37px;height:29.31px;line-height:29.31px;"><0.1</div>
<div class="a foot"></div>
<div class="a ftxt">&#169; 2026 Ketchem Biotherapeutics Consulting LLC. All Rights Reserved.<span>v0.2.0</span></div>
<svg class="a" style="left:0;top:1065px;" width="26" height="14" viewBox="0 0 26 14"><path d="M0 0 C1 9 9 14.5 26 14.5 V14 H0 Z" fill="#7a7d84"/><path d="M0 0 C1 9 9 14.5 26 14.5" fill="none" stroke="#ffffff" stroke-width="1" opacity="0.85"/></svg>
<svg class="a" style="left:1189px;top:1073.5px;" width="11" height="5.5" viewBox="0 0 11 5.5"><path d="M11 0 Q10 5.5 0 5.5 H11 Z" fill="#85888f"/></svg>
<div class="a" style="left:1198.5px;top:95px;width:1.5px;height:950px;background:#dfdfe2;"></div>
</body></html>
